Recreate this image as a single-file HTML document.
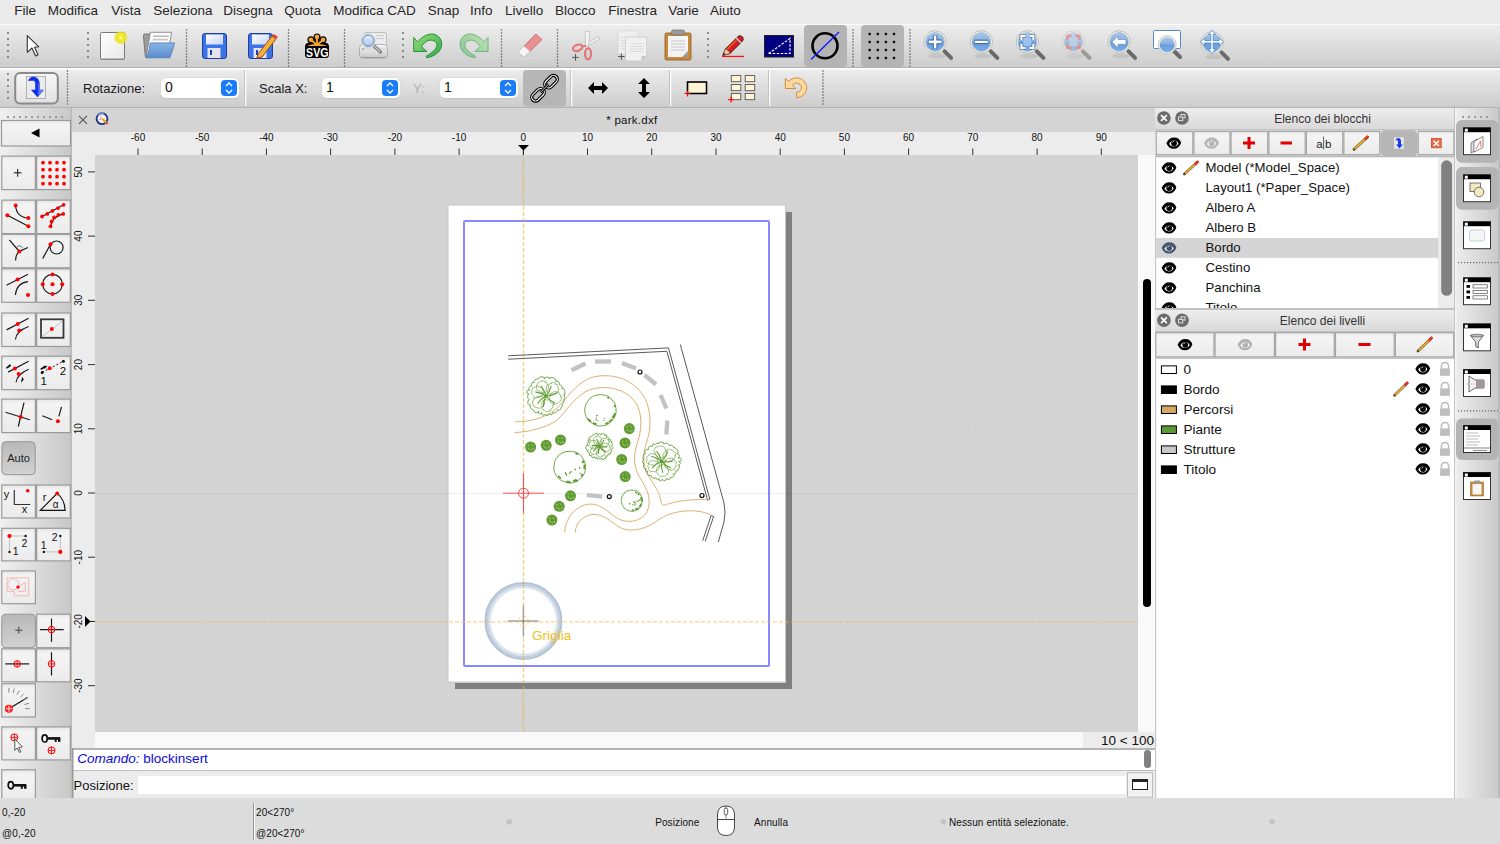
<!DOCTYPE html><html><head><meta charset="utf-8"><style>
*{margin:0;padding:0;box-sizing:border-box}
html,body{width:1500px;height:844px;overflow:hidden;background:#ececec;font-family:"Liberation Sans",sans-serif;color:#222}
.a{position:absolute}
.t{position:absolute;white-space:nowrap;line-height:1}
svg.ov{position:absolute;left:0;top:0;overflow:visible}
.spin{position:absolute;background:#fff;border-radius:5px;box-shadow:0 0 0 0.5px #d8d8d8, 0 0.5px 1px rgba(0,0,0,.15)}
.spinb{position:absolute;background:#1a7cf8;border-radius:4px}
</style></head><body><div class="a" style="left:0;top:0;width:1500px;height:24px;background:#ebebeb"></div>
<div class="t" style="left:14.3px;top:4px;font-size:13.5px;color:#262626">File</div>
<div class="t" style="left:47.7px;top:4px;font-size:13.5px;color:#262626">Modifica</div>
<div class="t" style="left:111.3px;top:4px;font-size:13.5px;color:#262626">Vista</div>
<div class="t" style="left:153.3px;top:4px;font-size:13.5px;color:#262626">Seleziona</div>
<div class="t" style="left:223.3px;top:4px;font-size:13.5px;color:#262626">Disegna</div>
<div class="t" style="left:284.3px;top:4px;font-size:13.5px;color:#262626">Quota</div>
<div class="t" style="left:333.3px;top:4px;font-size:13.5px;color:#262626">Modifica CAD</div>
<div class="t" style="left:427.7px;top:4px;font-size:13.5px;color:#262626">Snap</div>
<div class="t" style="left:470px;top:4px;font-size:13.5px;color:#262626">Info</div>
<div class="t" style="left:505px;top:4px;font-size:13.5px;color:#262626">Livello</div>
<div class="t" style="left:555px;top:4px;font-size:13.5px;color:#262626">Blocco</div>
<div class="t" style="left:608.3px;top:4px;font-size:13.5px;color:#262626">Finestra</div>
<div class="t" style="left:668.3px;top:4px;font-size:13.5px;color:#262626">Varie</div>
<div class="t" style="left:710px;top:4px;font-size:13.5px;color:#262626">Aiuto</div>
<div class="a" style="left:0;top:24px;width:1500px;height:44px;background:linear-gradient(#fbfbfb 0,#fbfbfb 1px,#ededed 1.5px,#cdcdcd 42.5px,#aeaeae 43px,#b4b4b4 44px)"></div>
<div class="a" style="left:0;top:68px;width:1500px;height:40px;background:linear-gradient(#fbfbfb 0,#fbfbfb 1.5px,#ececec 2px,#cdcdcd 38.5px,#aeaeae 39px,#b8b8b8 40px)"></div>
<div class="a" style="left:0;top:108px;width:72px;height:690px;background:linear-gradient(90deg,#f0f0f0 0,#dcdcdc 35px,#c8c8c8 70px,#b4b4b4 72px)"></div>
<div class="a" style="left:72px;top:108px;width:1083px;height:24px;background:#d4d4d4"></div>
<div class="a" style="left:72px;top:132px;width:1083px;height:23px;background:#ececec"></div>
<div class="a" style="left:72px;top:132px;width:23px;height:616px;background:#ececec"></div>
<div class="a" style="left:95px;top:155px;width:1043px;height:577px;background:#d3d3d3"></div>
<div class="a" style="left:1138px;top:155px;width:17px;height:593px;background:#f9f9f9"></div>
<div class="a" style="left:95px;top:732px;width:1060px;height:16px;background:#f9f9f9"></div>
<div class="a" style="left:1143px;top:279px;width:8px;height:328px;background:#000;border-radius:4px"></div>
<div class="a" style="left:72px;top:748px;width:1083px;height:50px;background:#ececec"></div>
<div class="a" style="left:72px;top:748px;width:1083px;height:2px;background:#b4b4b4"></div>
<div class="a" style="left:72px;top:750px;width:1083px;height:20px;background:#fff"></div>
<div class="a" style="left:72px;top:770px;width:1083px;height:1px;background:#c0c0c0"></div>
<div class="a" style="left:138px;top:776px;width:988px;height:18px;background:#fff"></div>
<div class="a" style="left:1155px;top:108px;width:299px;height:690px;background:#ececec"></div>
<div class="a" style="left:1155px;top:157px;width:283px;height:151px;background:#fff"></div>
<div class="a" style="left:1155px;top:358px;width:299px;height:440px;background:#fff"></div>
<div class="a" style="left:1454px;top:108px;width:46px;height:690px;background:linear-gradient(90deg,#c4c4c4 0,#c4c4c4 1px,#f6f6f6 1px,#ececec 3px,#cacaca 44px,#b8b8b8 45px,#b8b8b8 46px)"></div>
<svg class="ov" width="1500" height="844" viewBox="0 0 1500 844"><defs>
<linearGradient id="paper" x1="0" y1="0" x2="1" y2="1"><stop offset="0" stop-color="#fff"/><stop offset="1" stop-color="#e8e8e8"/></linearGradient>
<radialGradient id="glow"><stop offset="0" stop-color="#fffff0"/><stop offset="0.25" stop-color="#f4ec30"/><stop offset="0.7" stop-color="#eee020" stop-opacity="0.9"/><stop offset="1" stop-color="#eee020" stop-opacity="0"/></radialGradient>
<linearGradient id="folder" x1="0" y1="0" x2="0" y2="1"><stop offset="0" stop-color="#8ab4e4"/><stop offset="1" stop-color="#5a8ccc"/></linearGradient>
<linearGradient id="flop" x1="0" y1="0" x2="1" y2="1"><stop offset="0" stop-color="#ffffff"/><stop offset="1" stop-color="#c8d4f8"/></linearGradient>
<linearGradient id="printer" x1="0" y1="0" x2="0" y2="1"><stop offset="0" stop-color="#fafafa"/><stop offset="1" stop-color="#c8c8c8"/></linearGradient>
<linearGradient id="lens" x1="0" y1="0" x2="0" y2="1"><stop offset="0" stop-color="#a8c8ec"/><stop offset="0.45" stop-color="#8ab0e0"/><stop offset="0.5" stop-color="#6a9cdc"/><stop offset="1" stop-color="#78aee8"/></linearGradient>
<linearGradient id="lens2" x1="0" y1="0" x2="0" y2="1"><stop offset="0" stop-color="#e8f0fa"/><stop offset="1" stop-color="#a8c4e4"/></linearGradient>
<linearGradient id="btn" x1="0" y1="0" x2="0" y2="1"><stop offset="0" stop-color="#f6f6f6"/><stop offset="0.5" stop-color="#ededed"/><stop offset="1" stop-color="#e0e0e0"/></linearGradient>
<linearGradient id="lbtn" x1="0" y1="0" x2="0" y2="1"><stop offset="0" stop-color="#e6e6e6"/><stop offset="0.15" stop-color="#f4f4f4"/><stop offset="1" stop-color="#ebebeb"/></linearGradient>
<linearGradient id="hdr" x1="0" y1="0" x2="0" y2="1"><stop offset="0" stop-color="#ededed"/><stop offset="1" stop-color="#d9d9d9"/></linearGradient>
<radialGradient id="ringg" gradientUnits="userSpaceOnUse" cx="523.4" cy="621" r="39.5"><stop offset="0.78" stop-color="#ffffff" stop-opacity="0"/><stop offset="0.88" stop-color="#d8e2ec"/><stop offset="0.95" stop-color="#bccadb"/><stop offset="1" stop-color="#b4c4d6"/></radialGradient>
<linearGradient id="undog" x1="0" y1="0" x2="1" y2="1"><stop offset="0" stop-color="#98dc78"/><stop offset="1" stop-color="#2ea84a"/></linearGradient>
<linearGradient id="redog" x1="0" y1="0" x2="1" y2="1"><stop offset="0" stop-color="#c0e4b0"/><stop offset="1" stop-color="#80c490"/></linearGradient>
<linearGradient id="hlbtn" x1="0" y1="0" x2="0" y2="1"><stop offset="0" stop-color="#b8b8b8"/><stop offset="1" stop-color="#d2d2d2"/></linearGradient>
</defs><rect x="7.0" y="32.0" width="2" height="2" fill="#8a8a8a"/><rect x="7.0" y="38.0" width="2" height="2" fill="#8a8a8a"/><rect x="7.0" y="44.0" width="2" height="2" fill="#8a8a8a"/><rect x="7.0" y="50.0" width="2" height="2" fill="#8a8a8a"/><rect x="7.0" y="56.0" width="2" height="2" fill="#8a8a8a"/><rect x="87.0" y="32.0" width="2" height="2" fill="#8a8a8a"/><rect x="87.0" y="38.0" width="2" height="2" fill="#8a8a8a"/><rect x="87.0" y="44.0" width="2" height="2" fill="#8a8a8a"/><rect x="87.0" y="50.0" width="2" height="2" fill="#8a8a8a"/><rect x="87.0" y="56.0" width="2" height="2" fill="#8a8a8a"/><rect x="185.85" y="29.35" width="1.3" height="1.3" fill="#555"/><rect x="185.85" y="32.35" width="1.3" height="1.3" fill="#555"/><rect x="185.85" y="35.35" width="1.3" height="1.3" fill="#555"/><rect x="185.85" y="38.35" width="1.3" height="1.3" fill="#555"/><rect x="185.85" y="41.35" width="1.3" height="1.3" fill="#555"/><rect x="185.85" y="44.35" width="1.3" height="1.3" fill="#555"/><rect x="185.85" y="47.35" width="1.3" height="1.3" fill="#555"/><rect x="185.85" y="50.35" width="1.3" height="1.3" fill="#555"/><rect x="185.85" y="53.35" width="1.3" height="1.3" fill="#555"/><rect x="185.85" y="56.35" width="1.3" height="1.3" fill="#555"/><rect x="185.85" y="59.35" width="1.3" height="1.3" fill="#555"/><rect x="185.85" y="62.35" width="1.3" height="1.3" fill="#555"/><rect x="185.85" y="65.35" width="1.3" height="1.3" fill="#555"/><rect x="287.85" y="29.35" width="1.3" height="1.3" fill="#555"/><rect x="287.85" y="32.35" width="1.3" height="1.3" fill="#555"/><rect x="287.85" y="35.35" width="1.3" height="1.3" fill="#555"/><rect x="287.85" y="38.35" width="1.3" height="1.3" fill="#555"/><rect x="287.85" y="41.35" width="1.3" height="1.3" fill="#555"/><rect x="287.85" y="44.35" width="1.3" height="1.3" fill="#555"/><rect x="287.85" y="47.35" width="1.3" height="1.3" fill="#555"/><rect x="287.85" y="50.35" width="1.3" height="1.3" fill="#555"/><rect x="287.85" y="53.35" width="1.3" height="1.3" fill="#555"/><rect x="287.85" y="56.35" width="1.3" height="1.3" fill="#555"/><rect x="287.85" y="59.35" width="1.3" height="1.3" fill="#555"/><rect x="287.85" y="62.35" width="1.3" height="1.3" fill="#555"/><rect x="287.85" y="65.35" width="1.3" height="1.3" fill="#555"/><rect x="343.85" y="29.35" width="1.3" height="1.3" fill="#555"/><rect x="343.85" y="32.35" width="1.3" height="1.3" fill="#555"/><rect x="343.85" y="35.35" width="1.3" height="1.3" fill="#555"/><rect x="343.85" y="38.35" width="1.3" height="1.3" fill="#555"/><rect x="343.85" y="41.35" width="1.3" height="1.3" fill="#555"/><rect x="343.85" y="44.35" width="1.3" height="1.3" fill="#555"/><rect x="343.85" y="47.35" width="1.3" height="1.3" fill="#555"/><rect x="343.85" y="50.35" width="1.3" height="1.3" fill="#555"/><rect x="343.85" y="53.35" width="1.3" height="1.3" fill="#555"/><rect x="343.85" y="56.35" width="1.3" height="1.3" fill="#555"/><rect x="343.85" y="59.35" width="1.3" height="1.3" fill="#555"/><rect x="343.85" y="62.35" width="1.3" height="1.3" fill="#555"/><rect x="343.85" y="65.35" width="1.3" height="1.3" fill="#555"/><rect x="402.0" y="32.0" width="2" height="2" fill="#8a8a8a"/><rect x="402.0" y="38.0" width="2" height="2" fill="#8a8a8a"/><rect x="402.0" y="44.0" width="2" height="2" fill="#8a8a8a"/><rect x="402.0" y="50.0" width="2" height="2" fill="#8a8a8a"/><rect x="402.0" y="56.0" width="2" height="2" fill="#8a8a8a"/><rect x="500.85" y="29.35" width="1.3" height="1.3" fill="#555"/><rect x="500.85" y="32.35" width="1.3" height="1.3" fill="#555"/><rect x="500.85" y="35.35" width="1.3" height="1.3" fill="#555"/><rect x="500.85" y="38.35" width="1.3" height="1.3" fill="#555"/><rect x="500.85" y="41.35" width="1.3" height="1.3" fill="#555"/><rect x="500.85" y="44.35" width="1.3" height="1.3" fill="#555"/><rect x="500.85" y="47.35" width="1.3" height="1.3" fill="#555"/><rect x="500.85" y="50.35" width="1.3" height="1.3" fill="#555"/><rect x="500.85" y="53.35" width="1.3" height="1.3" fill="#555"/><rect x="500.85" y="56.35" width="1.3" height="1.3" fill="#555"/><rect x="500.85" y="59.35" width="1.3" height="1.3" fill="#555"/><rect x="500.85" y="62.35" width="1.3" height="1.3" fill="#555"/><rect x="500.85" y="65.35" width="1.3" height="1.3" fill="#555"/><rect x="556.85" y="29.35" width="1.3" height="1.3" fill="#555"/><rect x="556.85" y="32.35" width="1.3" height="1.3" fill="#555"/><rect x="556.85" y="35.35" width="1.3" height="1.3" fill="#555"/><rect x="556.85" y="38.35" width="1.3" height="1.3" fill="#555"/><rect x="556.85" y="41.35" width="1.3" height="1.3" fill="#555"/><rect x="556.85" y="44.35" width="1.3" height="1.3" fill="#555"/><rect x="556.85" y="47.35" width="1.3" height="1.3" fill="#555"/><rect x="556.85" y="50.35" width="1.3" height="1.3" fill="#555"/><rect x="556.85" y="53.35" width="1.3" height="1.3" fill="#555"/><rect x="556.85" y="56.35" width="1.3" height="1.3" fill="#555"/><rect x="556.85" y="59.35" width="1.3" height="1.3" fill="#555"/><rect x="556.85" y="62.35" width="1.3" height="1.3" fill="#555"/><rect x="556.85" y="65.35" width="1.3" height="1.3" fill="#555"/><rect x="707.0" y="32.0" width="2" height="2" fill="#8a8a8a"/><rect x="707.0" y="38.0" width="2" height="2" fill="#8a8a8a"/><rect x="707.0" y="44.0" width="2" height="2" fill="#8a8a8a"/><rect x="707.0" y="50.0" width="2" height="2" fill="#8a8a8a"/><rect x="707.0" y="56.0" width="2" height="2" fill="#8a8a8a"/><rect x="852.35" y="29.35" width="1.3" height="1.3" fill="#555"/><rect x="852.35" y="32.35" width="1.3" height="1.3" fill="#555"/><rect x="852.35" y="35.35" width="1.3" height="1.3" fill="#555"/><rect x="852.35" y="38.35" width="1.3" height="1.3" fill="#555"/><rect x="852.35" y="41.35" width="1.3" height="1.3" fill="#555"/><rect x="852.35" y="44.35" width="1.3" height="1.3" fill="#555"/><rect x="852.35" y="47.35" width="1.3" height="1.3" fill="#555"/><rect x="852.35" y="50.35" width="1.3" height="1.3" fill="#555"/><rect x="852.35" y="53.35" width="1.3" height="1.3" fill="#555"/><rect x="852.35" y="56.35" width="1.3" height="1.3" fill="#555"/><rect x="852.35" y="59.35" width="1.3" height="1.3" fill="#555"/><rect x="852.35" y="62.35" width="1.3" height="1.3" fill="#555"/><rect x="852.35" y="65.35" width="1.3" height="1.3" fill="#555"/><rect x="909.35" y="29.35" width="1.3" height="1.3" fill="#555"/><rect x="909.35" y="32.35" width="1.3" height="1.3" fill="#555"/><rect x="909.35" y="35.35" width="1.3" height="1.3" fill="#555"/><rect x="909.35" y="38.35" width="1.3" height="1.3" fill="#555"/><rect x="909.35" y="41.35" width="1.3" height="1.3" fill="#555"/><rect x="909.35" y="44.35" width="1.3" height="1.3" fill="#555"/><rect x="909.35" y="47.35" width="1.3" height="1.3" fill="#555"/><rect x="909.35" y="50.35" width="1.3" height="1.3" fill="#555"/><rect x="909.35" y="53.35" width="1.3" height="1.3" fill="#555"/><rect x="909.35" y="56.35" width="1.3" height="1.3" fill="#555"/><rect x="909.35" y="59.35" width="1.3" height="1.3" fill="#555"/><rect x="909.35" y="62.35" width="1.3" height="1.3" fill="#555"/><rect x="909.35" y="65.35" width="1.3" height="1.3" fill="#555"/><path d="M27.3 35.7 L27.3 52.3 L32 48 L35.6 56 L38 54.7 L34.6 47.3 L38.8 46.8 Z" fill="#fff" stroke="#333" stroke-width="1.1" stroke-linejoin="round"/><rect x="100.5" y="32.5" width="24" height="27" rx="1" fill="url(#paper)" stroke="#7a7a7a" stroke-width="1"/><rect x="101" y="58.5" width="23" height="1.5" fill="#8a8a8a"/><circle cx="120.8" cy="37.6" r="7.3" fill="url(#glow)"/><path d="M144.5 34 Q143.3 34 143.4 35.5 L145.3 56.8 L150 56.8 L150.5 34 Z" fill="#9c9c9c" stroke="#6a6a6a" stroke-width="0.8"/><path d="M150.3 32.3 L171.7 32.3 L169.5 44 L146.5 56 Z" fill="#fafafa" stroke="#7a7a7a" stroke-width="0.8"/><rect x="153.2" y="35.4" width="15.5" height="1.6" fill="#bdbdbd"/><rect x="152.8" y="38.8" width="15" height="1.6" fill="#c4c4c4"/><path d="M150.3 42.9 L174.6 42.9 Q173 50 169.8 57.8 L145.9 57.8 Q149 54 150.3 42.9 Z" fill="url(#folder)" stroke="#4a7cc0" stroke-width="0.8" stroke-linejoin="round"/><rect x="202.5" y="33.5" width="24" height="25" rx="2.5" fill="#3b73e8" stroke="#1f3fa0" stroke-width="1"/><rect x="206" y="34.5" width="17" height="10" fill="url(#flop)"/><rect x="207.5" y="48" width="13" height="10" fill="#e4e4ea"/><rect x="210" y="50" width="2" height="5" fill="#1840c0"/><rect x="248.5" y="33.5" width="24" height="25" rx="2.5" fill="#3b73e8" stroke="#1f3fa0" stroke-width="1"/><rect x="252" y="34.5" width="17" height="10" fill="url(#flop)"/><rect x="253.5" y="48" width="13" height="10" fill="#e4e4ea"/><rect x="256" y="50" width="2" height="5" fill="#1840c0"/><path d="M258 54 L272 36 L276 39 L262 57 L257 58 Z" fill="#f2b53a" stroke="#a0401a" stroke-width="1"/><path d="M272 36 L274 34 L278 37 L276 39 Z" fill="#e04030"/><path d="M305 47 Q305 42.8 309 42.8 L325 42.8 Q329 42.8 329 47 L329 54.5 Q329 58 325.5 58 L308.5 58 Q305 58 305 54.5 Z" fill="#000"/><line x1="317" y1="44.5" x2="310.9" y2="39.8" stroke="#000" stroke-width="3.6" stroke-linecap="round"/><circle cx="310.9" cy="39.8" r="3.5" fill="#000"/><line x1="317" y1="44.5" x2="317" y2="36.9" stroke="#000" stroke-width="3.6" stroke-linecap="round"/><circle cx="317" cy="36.9" r="3.5" fill="#000"/><line x1="317" y1="44.5" x2="323.1" y2="39.8" stroke="#000" stroke-width="3.6" stroke-linecap="round"/><circle cx="323.1" cy="39.8" r="3.5" fill="#000"/><line x1="317" y1="45" x2="310.9" y2="39.8" stroke="#f9a930" stroke-width="1.8"/><circle cx="310.9" cy="39.8" r="2.3" fill="#f9a930"/><line x1="317" y1="45" x2="317" y2="36.9" stroke="#f9a930" stroke-width="1.8"/><circle cx="317" cy="36.9" r="2.3" fill="#f9a930"/><line x1="317" y1="45" x2="323.1" y2="39.8" stroke="#f9a930" stroke-width="1.8"/><circle cx="323.1" cy="39.8" r="2.3" fill="#f9a930"/><path d="M307 45.9 Q312 43.8 317 44 Q322 43.8 327.5 45.9 Z" fill="#f9a930"/><g transform="translate(317.3 57) scale(0.78 1)"><text x="0" y="0" font-family="Liberation Sans" font-weight="bold" font-size="13.6" fill="#fff" text-anchor="middle">SVG</text></g><rect x="364.5" y="32.5" width="22" height="16" rx="1" fill="#ececec" stroke="#b4b4b4" stroke-width="0.8"/><rect x="376" y="35" width="8" height="1" fill="#ccc"/><rect x="376" y="38" width="8" height="1" fill="#ccc"/><path d="M359.5 48 Q359.5 44.5 363 44.5 L384 44.5 Q387.5 44.5 387.5 48 L387.5 55.5 Q387.5 57.5 385 57.5 L362 57.5 Q359.5 57.5 359.5 55.5 Z" fill="url(#printer)" stroke="#a4a4a4" stroke-width="0.8"/><rect x="361" y="47.5" width="25" height="2.5" fill="#dcdcdc"/><circle cx="363" cy="49" r="0.8" fill="#777"/><ellipse cx="373.5" cy="58" rx="13" ry="1" fill="#000" opacity="0.12"/><line x1="373" y1="45" x2="380.5" y2="52" stroke="#7a7a7a" stroke-width="3.2" stroke-linecap="round"/><line x1="373.5" y1="45.5" x2="380" y2="51.5" stroke="#c8c8c8" stroke-width="1.2" stroke-linecap="round"/><circle cx="368.3" cy="40.7" r="7" fill="#f4f4f4" stroke="#c4c4c4" stroke-width="0.8"/><circle cx="368.3" cy="40.7" r="5.6" fill="url(#lens2)" stroke="#4f82c8" stroke-width="1"/><path d="M413.7 37.4 L417.6 41.9 C421 38 426 34 431.8 34 C437.5 34 441.7 38.5 441.7 44.2 C441.7 51 435 56.5 426.7 57.8 L426.1 56.3 C432 53 436.9 49 436.9 44.7 C436.9 42 434 40.2 430.1 40.2 C427 40.2 424 43 421.6 46.4 L426.7 51.5 L413.7 51.5 Z" fill="url(#undog)" stroke="#1a8a30" stroke-width="0.9" stroke-linejoin="round"/><path d="M413.7 37.4 L417.6 41.9 C421 38 426 34 431.8 34 C437.5 34 441.7 38.5 441.7 44.2 C441.7 51 435 56.5 426.7 57.8 L426.1 56.3 C432 53 436.9 49 436.9 44.7 C436.9 42 434 40.2 430.1 40.2 C427 40.2 424 43 421.6 46.4 L426.7 51.5 L413.7 51.5 Z" transform="translate(901.7 0) scale(-1 1)" fill="url(#redog)" stroke="#6aae80" stroke-width="0.9" stroke-linejoin="round"/><path d="M518 52 L536 34 L542 39.5 L524 57.5 Z" fill="#e89090" stroke="#c46a6a" stroke-width="0.8"/><path d="M518 52 L524 46 L530 51.5 L524 57.5 Z" fill="#f4f4f4" stroke="#c8c8c8" stroke-width="0.8"/><line x1="522" y1="58.5" x2="541" y2="57" stroke="#ddd" stroke-width="1.2"/><path d="M585.2 31.5 L589.5 31 L589 46.5 L585.5 46 Z" fill="#f4f4f4" stroke="#b8b8b8" stroke-width="0.7"/><path d="M588.5 42.5 L598.8 36.5 L599.8 39 L589 45 Z" fill="#f4f4f4" stroke="#b8b8b8" stroke-width="0.7"/><ellipse cx="577.6" cy="47.8" rx="4.8" ry="3" transform="rotate(-20 577.6 47.8)" fill="none" stroke="#e47878" stroke-width="2.3"/><ellipse cx="588.1" cy="53.8" rx="3" ry="5.5" fill="none" stroke="#e47878" stroke-width="2.3"/><path d="M581.5 46.5 L586 46" stroke="#e47878" stroke-width="2"/><rect x="572.2" y="56.9" width="6.6" height="1" fill="#555"/><rect x="575" y="54.1" width="1" height="6.6" fill="#555"/><rect x="618" y="30.7" width="20.2" height="23.7" rx="1.2" fill="#efefef" stroke="#d4d4d4" stroke-width="0.8"/><rect x="621" y="37" width="5" height="0.8" fill="#d8d8d8"/><rect x="621" y="40" width="5" height="0.8" fill="#d8d8d8"/><rect x="621" y="42.8" width="5" height="0.8" fill="#d8d8d8"/><rect x="621" y="45.6" width="5" height="0.8" fill="#d8d8d8"/><rect x="621" y="48.4" width="5" height="0.8" fill="#d8d8d8"/><path d="M626.5 37 Q625.6 37 625.6 38 L625.6 60 Q625.6 61 626.5 61 L641.5 61 L646.6 56 L646.6 38 Q646.6 37 645.6 37 Z" fill="#f1f1f1" stroke="#c8c8c8" stroke-width="0.8"/><path d="M641.5 61 L641.5 56 L646.6 56 Z" fill="#c4c4c4"/><rect x="630" y="43.3" width="13.5" height="0.8" fill="#d4d4d4"/><rect x="630" y="46" width="13.5" height="0.8" fill="#d4d4d4"/><rect x="630" y="48.6" width="13.5" height="0.8" fill="#d4d4d4"/><rect x="630" y="51.2" width="13.5" height="0.8" fill="#d4d4d4"/><rect x="618.1" y="56" width="6.6" height="1" fill="#555"/><rect x="620.9" y="53.2" width="1" height="6.6" fill="#555"/><rect x="665" y="33" width="26" height="27" rx="1.5" fill="#c8893a" stroke="#8a5a20" stroke-width="0.8"/><rect x="668" y="36" width="20" height="21" fill="#f4f4f4"/><rect x="671.5" y="30" width="13" height="5" rx="1.5" fill="#9a9a9a" stroke="#666" stroke-width="0.6"/><line x1="671" y1="41" x2="685" y2="41" stroke="#c0c0c0" stroke-width="0.9"/><line x1="671" y1="44" x2="685" y2="44" stroke="#c0c0c0" stroke-width="0.9"/><line x1="671" y1="47" x2="685" y2="47" stroke="#c0c0c0" stroke-width="0.9"/><line x1="671" y1="50" x2="685" y2="50" stroke="#c0c0c0" stroke-width="0.9"/><path d="M682 57 L688 51 L688 57 Z" fill="#9a9a9a"/><line x1="728.5" y1="50.5" x2="740" y2="39" stroke="#5a2a10" stroke-width="7.2" stroke-linecap="round"/><line x1="728.5" y1="50.5" x2="740" y2="39" stroke="#d8182a" stroke-width="5.4" stroke-linecap="round"/><line x1="727.3" y1="49.3" x2="736.5" y2="40" stroke="#f05a20" stroke-width="1.6"/><path d="M735.6 37.4 L741.2 43" stroke="#c8c8c8" stroke-width="1.5"/><path d="M725.8 48.2 L730.8 53.2 L722.6 55.6 Z" fill="#f2c8a0" stroke="#5a2a10" stroke-width="0.8" stroke-linejoin="round"/><path d="M722.6 55.6 L723.6 52.6 L725.6 54.6 Z" fill="#222"/><rect x="722" y="55.8" width="22" height="1.3" fill="#ff1010"/><rect x="764.5" y="35.5" width="29" height="21.5" fill="#000080" stroke="#222" stroke-width="1"/><path d="M768.5 53.5 L790 38.5 L790 53.5 Z" fill="none" stroke="#fff" stroke-width="1.2" stroke-dasharray="2.5,1.5"/><rect x="804" y="25" width="43" height="42" rx="4" fill="#b4b4b4"/><rect x="861" y="25" width="43" height="42" rx="4" fill="#b4b4b4"/><circle cx="825" cy="45.8" r="12.5" fill="none" stroke="#000" stroke-width="2.6"/><line x1="811" y1="59.5" x2="839" y2="32" stroke="#0a1aff" stroke-width="1.3"/><rect x="868.5" y="32.8" width="2.4" height="2.4" fill="#111"/><rect x="876.5999999999999" y="32.8" width="2.4" height="2.4" fill="#111"/><rect x="884.6999999999999" y="32.8" width="2.4" height="2.4" fill="#111"/><rect x="892.8" y="32.8" width="2.4" height="2.4" fill="#111"/><rect x="868.5" y="40.8" width="2.4" height="2.4" fill="#111"/><rect x="876.5999999999999" y="40.8" width="2.4" height="2.4" fill="#111"/><rect x="884.6999999999999" y="40.8" width="2.4" height="2.4" fill="#111"/><rect x="892.8" y="40.8" width="2.4" height="2.4" fill="#111"/><rect x="868.5" y="48.8" width="2.4" height="2.4" fill="#111"/><rect x="876.5999999999999" y="48.8" width="2.4" height="2.4" fill="#111"/><rect x="884.6999999999999" y="48.8" width="2.4" height="2.4" fill="#111"/><rect x="892.8" y="48.8" width="2.4" height="2.4" fill="#111"/><rect x="868.5" y="56.8" width="2.4" height="2.4" fill="#111"/><rect x="876.5999999999999" y="56.8" width="2.4" height="2.4" fill="#111"/><rect x="884.6999999999999" y="56.8" width="2.4" height="2.4" fill="#111"/><rect x="892.8" y="56.8" width="2.4" height="2.4" fill="#111"/><g><ellipse cx="937.1" cy="55.9" rx="9" ry="2.5" fill="#000" opacity="0.08"/><line x1="944.6" y1="51.4" x2="951.1" y2="57.9" stroke="#6a6a6a" stroke-width="4" stroke-linecap="round"/><circle cx="935.1" cy="41.9" r="11.2" fill="#f2f2ec" stroke="#bdbdb4" stroke-width="1"/><circle cx="935.1" cy="41.9" r="9.3" fill="url(#lens)" stroke="#9ab0c8" stroke-width="0.7"/><path d="M928.5 41.9 h13 M935.1 35.5 v13" stroke="#2a5a9a" stroke-width="4.6"/><path d="M928.8 41.9 h12.6 M935.1 35.8 v12.4" stroke="#fff" stroke-width="2.6"/></g><g><ellipse cx="983.3" cy="55.9" rx="9" ry="2.5" fill="#000" opacity="0.08"/><line x1="990.8" y1="51.4" x2="997.3" y2="57.9" stroke="#6a6a6a" stroke-width="4" stroke-linecap="round"/><circle cx="981.3" cy="41.9" r="11.2" fill="#f2f2ec" stroke="#bdbdb4" stroke-width="1"/><circle cx="981.3" cy="41.9" r="9.3" fill="url(#lens)" stroke="#9ab0c8" stroke-width="0.7"/><path d="M974.5 41.9 h13.6" stroke="#2a5a9a" stroke-width="4.4"/><path d="M974.8 41.9 h13" stroke="#fff" stroke-width="2.4"/></g><g><ellipse cx="1029.4" cy="55.9" rx="9" ry="2.5" fill="#000" opacity="0.08"/><line x1="1036.9" y1="51.4" x2="1043.4" y2="57.9" stroke="#6a6a6a" stroke-width="4" stroke-linecap="round"/><circle cx="1027.4" cy="41.9" r="11.2" fill="#f2f2ec" stroke="#bdbdb4" stroke-width="1"/><circle cx="1027.4" cy="41.9" r="9.3" fill="url(#lens)" stroke="#9ab0c8" stroke-width="0.7"/><rect x="1023.4000000000001" y="37.9" width="8" height="8" fill="#a8c8ec" opacity="0.8"/><path d="M1021.4000000000001 39.9 V35.9 H1025.4 M1029.4 35.9 H1033.4 V39.9 M1033.4 43.9 V47.9 H1029.4 M1025.4 47.9 H1021.4000000000001 V43.9" fill="none" stroke="#2a5aa0" stroke-width="3.4"/><path d="M1021.4000000000001 39.9 V35.9 H1025.4 M1029.4 35.9 H1033.4 V39.9 M1033.4 43.9 V47.9 H1029.4 M1025.4 47.9 H1021.4000000000001 V43.9" fill="none" stroke="#fff" stroke-width="2.2"/></g><g opacity="0.55"><ellipse cx="1075.5" cy="55.9" rx="9" ry="2.5" fill="#000" opacity="0.08"/><line x1="1083.0" y1="51.4" x2="1089.5" y2="57.9" stroke="#6a6a6a" stroke-width="4" stroke-linecap="round"/><circle cx="1073.5" cy="41.9" r="11.2" fill="#f2f2ec" stroke="#bdbdb4" stroke-width="1"/><circle cx="1073.5" cy="41.9" r="9.3" fill="url(#lens)" stroke="#9ab0c8" stroke-width="0.7"/><rect x="1069.5" y="37.9" width="8" height="8" fill="#a8c8ec" opacity="0.8"/><path d="M1067.5 39.9 V35.9 H1071.5 M1075.5 35.9 H1079.5 V39.9 M1079.5 43.9 V47.9 H1075.5 M1071.5 47.9 H1067.5 V43.9" fill="none" stroke="#f05050" stroke-width="2.2"/></g><g><ellipse cx="1121.1" cy="55.9" rx="9" ry="2.5" fill="#000" opacity="0.08"/><line x1="1128.6" y1="51.4" x2="1135.1" y2="57.9" stroke="#6a6a6a" stroke-width="4" stroke-linecap="round"/><circle cx="1119.1" cy="41.9" r="11.2" fill="#f2f2ec" stroke="#bdbdb4" stroke-width="1"/><circle cx="1119.1" cy="41.9" r="9.3" fill="url(#lens)" stroke="#9ab0c8" stroke-width="0.7"/><path d="M1112 41.9 L1118 36 L1118 39.5 L1126 39.5 L1126 44.3 L1118 44.3 L1118 48 Z" fill="#fff" stroke="#5a88c0" stroke-width="0.6"/></g><rect x="1153.5" y="30.5" width="27" height="18" rx="1" fill="#fff" stroke="#5a88c8" stroke-width="1"/><line x1="1174" y1="51" x2="1180" y2="57" stroke="#6a6a6a" stroke-width="4" stroke-linecap="round"/><circle cx="1167.2" cy="44.7" r="9" fill="#f0f0ea" stroke="#c4c4bc" stroke-width="0.9"/><circle cx="1167.2" cy="44.7" r="7.5" fill="url(#lens)"/><g><ellipse cx="1214" cy="56.8" rx="9" ry="2.5" fill="#000" opacity="0.08"/><line x1="1221.5" y1="52.3" x2="1228" y2="58.8" stroke="#6a6a6a" stroke-width="4" stroke-linecap="round"/><circle cx="1212" cy="42.8" r="11.2" fill="#f2f2ec" stroke="#bdbdb4" stroke-width="1"/><circle cx="1212" cy="42.8" r="9.3" fill="url(#lens)" stroke="#9ab0c8" stroke-width="0.7"/><path d="M1212 30 l-3.5 4.5 h2.3 v6 h-6 v-2.3 l-4.5 3.5 l4.5 3.5 v-2.3 h6 v6 h-2.3 l3.5 4.5 l3.5 -4.5 h-2.3 v-6 h6 v2.3 l4.5 -3.5 l-4.5 -3.5 v2.3 h-6 v-6 h2.3 Z" fill="#fff" stroke="#3a78d0" stroke-width="0.7"/></g><rect x="7.0" y="73.0" width="2" height="2" fill="#8a8a8a"/><rect x="7.0" y="79.0" width="2" height="2" fill="#8a8a8a"/><rect x="7.0" y="85.0" width="2" height="2" fill="#8a8a8a"/><rect x="7.0" y="91.0" width="2" height="2" fill="#8a8a8a"/><rect x="7.0" y="97.0" width="2" height="2" fill="#8a8a8a"/><rect x="66.85" y="70.35" width="1.3" height="1.3" fill="#555"/><rect x="66.85" y="73.35" width="1.3" height="1.3" fill="#555"/><rect x="66.85" y="76.35" width="1.3" height="1.3" fill="#555"/><rect x="66.85" y="79.35" width="1.3" height="1.3" fill="#555"/><rect x="66.85" y="82.35" width="1.3" height="1.3" fill="#555"/><rect x="66.85" y="85.35" width="1.3" height="1.3" fill="#555"/><rect x="66.85" y="88.35" width="1.3" height="1.3" fill="#555"/><rect x="66.85" y="91.35" width="1.3" height="1.3" fill="#555"/><rect x="66.85" y="94.35" width="1.3" height="1.3" fill="#555"/><rect x="66.85" y="97.35" width="1.3" height="1.3" fill="#555"/><rect x="66.85" y="100.35" width="1.3" height="1.3" fill="#555"/><rect x="66.85" y="103.35" width="1.3" height="1.3" fill="#555"/><rect x="15.2" y="73" width="42.6" height="30.6" rx="5" fill="url(#btn)" stroke="#8a8a8a" stroke-width="2"/><rect x="26.5" y="76.5" width="19" height="22" fill="#ececec" stroke="#9a9a9a" stroke-width="0.7"/><path d="M28.5 80.5 Q30 76.5 34 77 Q39 77.5 39.5 84 L39.5 90 L43.5 90 L37.5 97 L31.5 90 L35.5 90 L35.5 84 Q35.5 80.5 33.5 80.5 Z" fill="#1030f0" stroke="#0a22c8" stroke-width="0.5"/><path d="M38 82 Q39.5 84 39.5 86 L39.5 90 L43.5 90 L38.5 96 Z" fill="#8898f8" opacity="0.7"/><rect x="244" y="70" width="1" height="36" fill="#c4c4c4"/><rect x="245" y="70" width="1.3" height="36" fill="#fdfdfd"/><rect x="570" y="70" width="1" height="36" fill="#c4c4c4"/><rect x="571" y="70" width="1.3" height="36" fill="#fdfdfd"/><rect x="669" y="70" width="1" height="36" fill="#c4c4c4"/><rect x="670" y="70" width="1.3" height="36" fill="#fdfdfd"/><rect x="768" y="70" width="1" height="36" fill="#c4c4c4"/><rect x="769" y="70" width="1.3" height="36" fill="#fdfdfd"/><rect x="822.35" y="70.35" width="1.3" height="1.3" fill="#555"/><rect x="822.35" y="73.35" width="1.3" height="1.3" fill="#555"/><rect x="822.35" y="76.35" width="1.3" height="1.3" fill="#555"/><rect x="822.35" y="79.35" width="1.3" height="1.3" fill="#555"/><rect x="822.35" y="82.35" width="1.3" height="1.3" fill="#555"/><rect x="822.35" y="85.35" width="1.3" height="1.3" fill="#555"/><rect x="822.35" y="88.35" width="1.3" height="1.3" fill="#555"/><rect x="822.35" y="91.35" width="1.3" height="1.3" fill="#555"/><rect x="822.35" y="94.35" width="1.3" height="1.3" fill="#555"/><rect x="822.35" y="97.35" width="1.3" height="1.3" fill="#555"/><rect x="822.35" y="100.35" width="1.3" height="1.3" fill="#555"/><rect x="822.35" y="103.35" width="1.3" height="1.3" fill="#555"/><rect x="523" y="70" width="43" height="36.4" rx="4" fill="#b6b6b6"/><g transform="rotate(-45 551 81.7)"><rect x="543.7" y="77.9" width="14.6" height="7.6" rx="3.8" fill="none" stroke="#000" stroke-width="3.3"/><rect x="543.7" y="77.9" width="14.6" height="7.6" rx="3.8" fill="none" stroke="#fff" stroke-width="1.1"/></g><g transform="rotate(-45 538 94.8)"><rect x="530.7" y="91.0" width="14.6" height="7.6" rx="3.8" fill="none" stroke="#000" stroke-width="3.3"/><rect x="530.7" y="91.0" width="14.6" height="7.6" rx="3.8" fill="none" stroke="#fff" stroke-width="1.1"/></g><line x1="540.5" y1="92.3" x2="548.5" y2="84.2" stroke="#000" stroke-width="2.4"/><line x1="540.5" y1="92.3" x2="548.5" y2="84.2" stroke="#fff" stroke-width="0.8"/><path d="M588 88 L594 82 L594 86 L602 86 L602 82 L608 88 L602 94 L602 90 L594 90 L594 94 Z" fill="#000"/><path d="M644 78 L650 84 L646 84 L646 92 L650 92 L644 98 L638 92 L642 92 L642 84 L638 84 Z" fill="#000"/><rect x="687.5" y="82" width="19" height="11.5" fill="#fff5d6" stroke="#000" stroke-width="1.6"/><path d="M684.5 93.5 h6 M687.5 90.5 v6" stroke="#ff0000" stroke-width="1.1"/><rect x="731.3" y="75.5" width="9.5" height="6.2" fill="#fff5d6" stroke="#555" stroke-width="0.9"/><rect x="745.2" y="75.5" width="9.5" height="6.2" fill="#fff5d6" stroke="#555" stroke-width="0.9"/><rect x="731.3" y="84.5" width="9.5" height="6.2" fill="#fff5d6" stroke="#555" stroke-width="0.9"/><rect x="745.2" y="84.5" width="9.5" height="6.2" fill="#fff5d6" stroke="#555" stroke-width="0.9"/><rect x="731.3" y="93.5" width="9.5" height="6.2" fill="#fff5d6" stroke="#555" stroke-width="0.9"/><rect x="745.2" y="93.5" width="9.5" height="6.2" fill="#fff5d6" stroke="#555" stroke-width="0.9"/><path d="M728 99.7 h6 M731 96.7 v6" stroke="#ff0000" stroke-width="1.1"/><path d="M785.3 78 L788.5 81.4 C790.5 79.3 793.5 77.9 796.7 77.9 C802.2 77.9 806.7 82.2 806.7 87.6 C806.7 93.1 802.2 97.6 796.7 97.6 L796.7 92.4 C799.2 92.4 801.4 90.2 801.4 87.6 C801.4 85.1 799.2 83.2 796.7 83.2 C795 83.2 793.5 84 792.4 85.1 L795.6 88.5 L785.3 88.5 Z" fill="#fdd8a0" stroke="#c8862a" stroke-width="0.9" stroke-linejoin="round"/><rect x="7" y="116" width="2" height="2" fill="#9a9a9a"/><rect x="13" y="116" width="2" height="2" fill="#9a9a9a"/><rect x="19" y="116" width="2" height="2" fill="#9a9a9a"/><rect x="25" y="116" width="2" height="2" fill="#9a9a9a"/><rect x="31" y="116" width="2" height="2" fill="#9a9a9a"/><rect x="37" y="116" width="2" height="2" fill="#9a9a9a"/><rect x="43" y="116" width="2" height="2" fill="#9a9a9a"/><rect x="49" y="116" width="2" height="2" fill="#9a9a9a"/><rect x="55" y="116" width="2" height="2" fill="#9a9a9a"/><rect x="61" y="116" width="2" height="2" fill="#9a9a9a"/><g transform="translate(1 120)"><rect x="0.5" y="0.5" width="69" height="25.5" fill="url(#lbtn)" stroke="#9a9a9a" stroke-width="1.2"/><path d="M30 13 L38.5 8.5 L38.5 17.5 Z" fill="#000"/></g><g transform="translate(1.3 155.6)"><rect x="0.5" y="0.5" width="33.6" height="33.5" fill="url(#lbtn)" stroke="#9a9a9a" stroke-width="1.2"/><path d="M12.5 17.2 h7.8 M16.4 13.3 v7.8" stroke="#111" stroke-width="1"/></g><g transform="translate(36.2 155.6)"><rect x="0.5" y="0.5" width="33.6" height="33.5" fill="url(#lbtn)" stroke="#9a9a9a" stroke-width="1.2"/><g transform="translate(1.5 0.8)"><circle cx="5.3" cy="6.3" r="1.85" fill="#ff0000"/><circle cx="5.3" cy="13.3" r="1.85" fill="#ff0000"/><circle cx="5.3" cy="20.3" r="1.85" fill="#ff0000"/><circle cx="5.3" cy="27.3" r="1.85" fill="#ff0000"/><circle cx="12.3" cy="6.3" r="1.85" fill="#ff0000"/><circle cx="12.3" cy="13.3" r="1.85" fill="#ff0000"/><circle cx="12.3" cy="20.3" r="1.85" fill="#ff0000"/><circle cx="12.3" cy="27.3" r="1.85" fill="#ff0000"/><circle cx="19.3" cy="6.3" r="1.85" fill="#ff0000"/><circle cx="19.3" cy="13.3" r="1.85" fill="#ff0000"/><circle cx="19.3" cy="20.3" r="1.85" fill="#ff0000"/><circle cx="19.3" cy="27.3" r="1.85" fill="#ff0000"/><circle cx="26.3" cy="6.3" r="1.85" fill="#ff0000"/><circle cx="26.3" cy="13.3" r="1.85" fill="#ff0000"/><circle cx="26.3" cy="20.3" r="1.85" fill="#ff0000"/><circle cx="26.3" cy="27.3" r="1.85" fill="#ff0000"/></g></g><g transform="translate(1.3 199.6)"><rect x="0.5" y="0.5" width="33.6" height="33.5" fill="url(#lbtn)" stroke="#9a9a9a" stroke-width="1.2"/><path d="M6.1 15.6 L27.1 26.7" stroke="#1a1a1a" stroke-width="1.2" fill="none"/><path d="M14.3 5.9 Q15 17.5 27.1 18.5" stroke="#1a1a1a" stroke-width="1.2" fill="none"/><circle cx="6.1" cy="15.6" r="2" fill="#ff0000"/><circle cx="27.1" cy="26.7" r="2" fill="#ff0000"/><circle cx="14.3" cy="5.9" r="2" fill="#ff0000"/><circle cx="27.1" cy="18.5" r="2" fill="#ff0000"/></g><g transform="translate(36.2 199.6)"><rect x="0.5" y="0.5" width="33.6" height="33.5" fill="url(#lbtn)" stroke="#9a9a9a" stroke-width="1.2"/><path d="M5.9 16.9 L27.4 5.2" stroke="#1a1a1a" stroke-width="1.2" fill="none"/><path d="M14.3 26.7 Q16 17 27 14.3" stroke="#1a1a1a" stroke-width="1.2" fill="none"/><circle cx="5.9" cy="16.9" r="1.9" fill="#ff0000"/><circle cx="11.1" cy="14.3" r="1.9" fill="#ff0000"/><circle cx="16.3" cy="11.3" r="1.9" fill="#ff0000"/><circle cx="21.8" cy="8.5" r="1.9" fill="#ff0000"/><circle cx="27.4" cy="5.2" r="1.9" fill="#ff0000"/><circle cx="14.3" cy="26.7" r="1.9" fill="#ff0000"/><circle cx="15.4" cy="21.9" r="1.9" fill="#ff0000"/><circle cx="17.9" cy="17.9" r="1.9" fill="#ff0000"/><circle cx="22.1" cy="15.3" r="1.9" fill="#ff0000"/><circle cx="27" cy="14.3" r="1.9" fill="#ff0000"/></g><g transform="translate(1.3 233.8)"><rect x="0.5" y="0.5" width="33.6" height="33.5" fill="url(#lbtn)" stroke="#9a9a9a" stroke-width="1.2"/><path d="M8.1 6.1 L18 17.6 L26.7 13.7" stroke="#1a1a1a" stroke-width="1.2" fill="none"/><path d="M14.3 26.7 Q14.5 20 18 17.6" stroke="#1a1a1a" stroke-width="1.2" fill="none"/><path d="M15.5 13.2 Q18.5 10.5 21.5 14" stroke="#333" stroke-width="0.7" fill="none"/><circle cx="18" cy="17.6" r="2" fill="#ff0000"/></g><g transform="translate(36.2 233.8)"><rect x="0.5" y="0.5" width="33.6" height="33.5" fill="url(#lbtn)" stroke="#9a9a9a" stroke-width="1.2"/><circle cx="20.4" cy="13.7" r="6.5" stroke="#1a1a1a" stroke-width="1.2" fill="none"/><path d="M6.5 24.8 L14.3 10.4" stroke="#1a1a1a" stroke-width="1.2" fill="none"/><circle cx="14.3" cy="10.4" r="2" fill="#ff0000"/></g><g transform="translate(1.3 268.3)"><rect x="0.5" y="0.5" width="33.6" height="33.5" fill="url(#lbtn)" stroke="#9a9a9a" stroke-width="1.2"/><path d="M5.2 16.9 L26.7 5.9" stroke="#1a1a1a" stroke-width="1.2" fill="none"/><path d="M14.1 26.7 Q15.5 14.5 26.7 13.4" stroke="#1a1a1a" stroke-width="1.2" fill="none"/><circle cx="16.3" cy="11.1" r="2" fill="#ff0000"/><circle cx="26.7" cy="26.7" r="2" fill="#ff0000"/></g><g transform="translate(36.2 268.3)"><rect x="0.5" y="0.5" width="33.6" height="33.5" fill="url(#lbtn)" stroke="#9a9a9a" stroke-width="1.2"/><circle cx="16.3" cy="15.9" r="9.8" stroke="#1a1a1a" stroke-width="1.2" fill="none"/><circle cx="16.3" cy="15.9" r="2" fill="#ff0000"/><circle cx="16.3" cy="6.1" r="2" fill="#ff0000"/><circle cx="16.3" cy="25.7" r="2" fill="#ff0000"/><circle cx="6.5" cy="15.9" r="2" fill="#ff0000"/><circle cx="26.1" cy="15.9" r="2" fill="#ff0000"/></g><g transform="translate(1.3 312.5)"><rect x="0.5" y="0.5" width="33.6" height="33.5" fill="url(#lbtn)" stroke="#9a9a9a" stroke-width="1.2"/><path d="M5.3 17.4 L27.3 5.7" stroke="#1a1a1a" stroke-width="1.2" fill="none"/><path d="M14.1 27 Q15 18.5 27.3 14" stroke="#1a1a1a" stroke-width="1.2" fill="none"/><circle cx="16.4" cy="11.4" r="2" fill="#ff0000"/><circle cx="17.9" cy="17.9" r="2" fill="#ff0000"/></g><g transform="translate(36.2 312.5)"><rect x="0.5" y="0.5" width="33.6" height="33.5" fill="url(#lbtn)" stroke="#9a9a9a" stroke-width="1.2"/><rect x="4.8" y="6.8" width="22.5" height="18.5" fill="none" stroke="#3a3a3a" stroke-width="1.8"/><path d="M6.8 23.6 L26.5 8.3" stroke="#888" stroke-width="0.8" stroke-dasharray="1.6,1.2"/><circle cx="15.6" cy="16.4" r="2" fill="#ff0000"/></g><g transform="translate(1.3 355.7)"><rect x="0.5" y="0.5" width="33.6" height="33.5" fill="url(#lbtn)" stroke="#9a9a9a" stroke-width="1.2"/><path d="M6.8 16.4 L27.3 5.6" stroke="#1a1a1a" stroke-width="1.2" fill="none"/><path d="M14.8 26.5 Q15.5 19 27.3 13.6" stroke="#1a1a1a" stroke-width="1.2" fill="none"/><circle cx="13.6" cy="12.9" r="2" fill="#ff0000"/><circle cx="17.4" cy="18.2" r="2" fill="#ff0000"/><path d="M4.5 12.7 L10 10 L8.5 8.2 Z" fill="#111"/><path d="M5 12.5 L8.5 10.5" stroke="#111" stroke-width="1.4"/><path d="M19.5 27 L21 21 L22.5 24 Z" fill="#111"/></g><g transform="translate(36.2 355.7)"><rect x="0.5" y="0.5" width="33.6" height="33.5" fill="url(#lbtn)" stroke="#9a9a9a" stroke-width="1.2"/><path d="M6 16.7 L27.2 5.5" stroke="#111" stroke-width="1" stroke-dasharray="2,2"/><circle cx="13.5" cy="12.6" r="2" fill="#ff0000"/><circle cx="6" cy="16.7" r="1.5" fill="#111"/><circle cx="27.2" cy="5.5" r="1.5" fill="#111"/><path d="M4.5 13.6 L8 11.6" stroke="#111" stroke-width="1.6"/><path d="M6.8 10.2 L11.3 10 L8.6 13.4 Z" fill="#111"/><text x="4.2" y="29" font-family="Liberation Sans" font-size="11.5" fill="#111">1</text><text x="23.6" y="19.2" font-family="Liberation Sans" font-size="11.5" fill="#111">2</text></g><g transform="translate(1.3 398.6)"><rect x="0.5" y="0.5" width="33.6" height="33.5" fill="url(#lbtn)" stroke="#9a9a9a" stroke-width="1.2"/><path d="M4.2 13.6 L28.5 21.2 M22.7 4.1 L17 27.9" stroke="#1a1a1a" stroke-width="1.2" fill="none"/><circle cx="19.4" cy="18.5" r="2" fill="#ff0000"/></g><g transform="translate(36.2 398.6)"><rect x="0.5" y="0.5" width="33.6" height="33.5" fill="url(#lbtn)" stroke="#9a9a9a" stroke-width="1.2"/><path d="M6.1 17.1 L16 21.2 M25.3 8.2 L22.7 17.7" stroke="#1a1a1a" stroke-width="1.2" fill="none"/><circle cx="21.7" cy="22.7" r="2" fill="#ff0000"/></g><g transform="translate(1.4 441.2)"><rect x="0.5" y="0.5" width="33.3" height="33" rx="4" fill="url(#hlbtn)" stroke="#959595" stroke-width="1"/><text x="17.2" y="21" font-family="Liberation Sans" font-size="11" fill="#222" text-anchor="middle">Auto</text></g><g transform="translate(1.3 484.5)"><rect x="0.5" y="0.5" width="33.6" height="33" fill="url(#lbtn)" stroke="#9a9a9a" stroke-width="1.2"/><path d="M13 5.6 V20 H29" stroke="#333" stroke-width="1.2" fill="none"/><circle cx="26.4" cy="6.2" r="1.8" fill="#ff0000"/><text x="2.5" y="13" font-family="Liberation Sans" font-size="11" fill="#111">y</text><text x="20.5" y="28.5" font-family="Liberation Sans" font-size="11" fill="#111">x</text></g><g transform="translate(36.2 484.5)"><rect x="0.5" y="0.5" width="33.6" height="33" fill="url(#lbtn)" stroke="#9a9a9a" stroke-width="1.2"/><path d="M4.1 25.8 L21 8.9 Q28.5 15 28.9 25.8 Z" stroke="#111" stroke-width="1.2" fill="none"/><circle cx="21" cy="8.9" r="1.9" fill="#ff0000"/><text x="6.5" y="16" font-family="Liberation Sans" font-size="11" fill="#111">r</text><text x="16.5" y="23.5" font-family="Liberation Sans" font-size="10" fill="#111">α</text></g><g transform="translate(1.3 527.8)"><rect x="0.5" y="0.5" width="33.6" height="32.6" fill="url(#lbtn)" stroke="#9a9a9a" stroke-width="1.2"/><path d="M8.2 8.2 H24.3 M8.2 8.2 V24.1" stroke="#bbb" stroke-width="0.9"/><circle cx="8.2" cy="8.2" r="2.1" fill="#ff0000"/><circle cx="24.3" cy="8.2" r="1.2" fill="#111"/><circle cx="8.2" cy="24.1" r="1.2" fill="#111"/><text x="20.3" y="19" font-family="Liberation Sans" font-size="10.5" fill="#111">2</text><text x="11.5" y="27.5" font-family="Liberation Sans" font-size="10.5" fill="#111">1</text></g><g transform="translate(36.2 527.8)"><rect x="0.5" y="0.5" width="33.6" height="32.6" fill="url(#lbtn)" stroke="#9a9a9a" stroke-width="1.2"/><path d="M7.6 24.1 H24.1 V8.2" stroke="#bbb" stroke-width="0.9" fill="none"/><circle cx="24.1" cy="24.1" r="2.1" fill="#ff0000"/><circle cx="7.6" cy="24.1" r="1.2" fill="#111"/><circle cx="24.1" cy="8.2" r="1.2" fill="#111"/><text x="4.5" y="20.8" font-family="Liberation Sans" font-size="10.5" fill="#111">1</text><text x="15.5" y="12.8" font-family="Liberation Sans" font-size="10.5" fill="#111">2</text></g><g transform="translate(1.3 570.4)"><rect x="0.5" y="0.5" width="33.6" height="32.8" fill="url(#lbtn)" stroke="#9a9a9a" stroke-width="1.2"/><path d="M5.8 7.4 H27.4 V25.4 H13 V21 H5.8 Z" fill="none" stroke="#f4b0b0" stroke-width="0.9"/><circle cx="12" cy="14" r="5.5" fill="none" stroke="#f4b0b0" stroke-width="0.9"/><path d="M16.7 16.7 L24 12 V21 H16.7" fill="none" stroke="#f4b0b0" stroke-width="0.9"/><circle cx="16.7" cy="16.7" r="1.7" fill="#ff0000"/></g><g transform="translate(1.3 613.7)"><rect x="0.5" y="0.5" width="33.6" height="33.5" rx="4" fill="url(#hlbtn)" stroke="#959595" stroke-width="1"/><path d="M14 16.5 h7 M17.5 13 v7" stroke="#444" stroke-width="1"/></g><g transform="translate(36.2 613.7)"><rect x="0.5" y="0.5" width="33.6" height="33.5" fill="url(#lbtn)" stroke="#9a9a9a" stroke-width="1.2"/><path d="M3.8 15.9 H27.5 M15.3 4.9 V28" stroke="#1a1a1a" stroke-width="1.2" fill="none"/><circle cx="15.3" cy="15.9" r="3.3" fill="none" stroke="#ff0000" stroke-width="1"/><path d="M12.0 15.9 h6.6 M15.3 12.600000000000001 v6.6" stroke="#ff0000" stroke-width="0.9"/></g><g transform="translate(1.3 648.3)"><rect x="0.5" y="0.5" width="33.6" height="33" fill="url(#lbtn)" stroke="#9a9a9a" stroke-width="1.2"/><path d="M3.8 15.6 H27.9" stroke="#1a1a1a" stroke-width="1.2" fill="none"/><circle cx="15.9" cy="15.6" r="3.3" fill="none" stroke="#ff0000" stroke-width="1"/><path d="M12.600000000000001 15.6 h6.6 M15.9 12.3 v6.6" stroke="#ff0000" stroke-width="0.9"/></g><g transform="translate(36.2 648.3)"><rect x="0.5" y="0.5" width="33.6" height="33" fill="url(#lbtn)" stroke="#9a9a9a" stroke-width="1.2"/><path d="M15.3 4 V27.2" stroke="#1a1a1a" stroke-width="1.2" fill="none"/><circle cx="15.3" cy="15.6" r="3.3" fill="none" stroke="#ff0000" stroke-width="1"/><path d="M12.0 15.6 h6.6 M15.3 12.3 v6.6" stroke="#ff0000" stroke-width="0.9"/></g><g transform="translate(1.3 683.2)"><rect x="0.5" y="0.5" width="33.6" height="33.3" fill="url(#lbtn)" stroke="#9a9a9a" stroke-width="1.2"/><path d="M7.6 25.5 L26.2 14.4" stroke="#111" stroke-width="1.2"/><circle cx="7.6" cy="25.5" r="4" fill="#ff2020"/><path d="M4.6 25.5 h6 M7.6 22.5 v6" stroke="#fff" stroke-width="0.8"/><path d="M7.6 9.3 L7.6 4.7" stroke="#888" stroke-width="1"/><path d="M11.8 9.9 L13.0 5.4" stroke="#888" stroke-width="1"/><path d="M15.7 11.5 L18.0 7.5" stroke="#888" stroke-width="1"/><path d="M19.1 14.0 L22.3 10.8" stroke="#888" stroke-width="1"/><path d="M21.6 17.4 L25.6 15.1" stroke="#888" stroke-width="1"/><path d="M23.2 21.3 L27.7 20.1" stroke="#888" stroke-width="1"/><path d="M23.8 25.5 L28.4 25.5" stroke="#888" stroke-width="1"/></g><g transform="translate(1.3 726.4)"><rect x="0.5" y="0.5" width="33.6" height="33" fill="url(#lbtn)" stroke="#9a9a9a" stroke-width="1.2"/><circle cx="13" cy="11" r="3.5" fill="none" stroke="#ff0000" stroke-width="1"/><path d="M9.5 11 h7.0 M13 7.5 v7.0" stroke="#ff0000" stroke-width="0.9"/><path d="M13.5 12.5 L13.5 24 L16 21.5 L18 26 L19.5 25.3 L17.5 21 L21 20.5 Z" fill="#fff" stroke="#444" stroke-width="0.9"/></g><g transform="translate(36.2 726.4)"><rect x="0.5" y="0.5" width="33.6" height="33" fill="url(#lbtn)" stroke="#9a9a9a" stroke-width="1.2"/><g transform="translate(5.5 12) scale(1.0)"><ellipse cx="3" cy="0" rx="2.6" ry="3.6" fill="none" stroke="#111" stroke-width="1.7"/><rect x="5.5" y="-1.3" width="13" height="2.6" fill="#111"/><rect x="13" y="0" width="2" height="3.5" fill="#111"/><rect x="16.3" y="0" width="2.4" height="3.5" fill="#111"/></g><circle cx="15.3" cy="24" r="3.5" fill="none" stroke="#ff0000" stroke-width="1"/><path d="M11.8 24 h7.0 M15.3 20.5 v7.0" stroke="#ff0000" stroke-width="0.9"/></g><g transform="translate(1.3 769.3)"><rect x="0.5" y="0.5" width="33.6" height="33" fill="url(#lbtn)" stroke="#9a9a9a" stroke-width="1.2"/><g transform="translate(6.5 16) scale(1.0)"><ellipse cx="3" cy="0" rx="2.6" ry="3.6" fill="none" stroke="#111" stroke-width="1.7"/><rect x="5.5" y="-1.3" width="13" height="2.6" fill="#111"/><rect x="13" y="0" width="2" height="3.5" fill="#111"/><rect x="16.3" y="0" width="2.4" height="3.5" fill="#111"/></g></g><line x1="138.0" y1="148.5" x2="138.0" y2="155" stroke="#333" stroke-width="1"/><text x="138.0" y="141" font-family="Liberation Sans" font-size="10" fill="#111" text-anchor="middle">-60</text><line x1="202.2" y1="148.5" x2="202.2" y2="155" stroke="#333" stroke-width="1"/><text x="202.2" y="141" font-family="Liberation Sans" font-size="10" fill="#111" text-anchor="middle">-50</text><line x1="266.4" y1="148.5" x2="266.4" y2="155" stroke="#333" stroke-width="1"/><text x="266.4" y="141" font-family="Liberation Sans" font-size="10" fill="#111" text-anchor="middle">-40</text><line x1="330.6" y1="148.5" x2="330.6" y2="155" stroke="#333" stroke-width="1"/><text x="330.6" y="141" font-family="Liberation Sans" font-size="10" fill="#111" text-anchor="middle">-30</text><line x1="394.9" y1="148.5" x2="394.9" y2="155" stroke="#333" stroke-width="1"/><text x="394.9" y="141" font-family="Liberation Sans" font-size="10" fill="#111" text-anchor="middle">-20</text><line x1="459.1" y1="148.5" x2="459.1" y2="155" stroke="#333" stroke-width="1"/><text x="459.1" y="141" font-family="Liberation Sans" font-size="10" fill="#111" text-anchor="middle">-10</text><line x1="523.3" y1="148.5" x2="523.3" y2="155" stroke="#333" stroke-width="1"/><text x="523.3" y="141" font-family="Liberation Sans" font-size="10" fill="#111" text-anchor="middle">0</text><line x1="587.5" y1="148.5" x2="587.5" y2="155" stroke="#333" stroke-width="1"/><text x="587.5" y="141" font-family="Liberation Sans" font-size="10" fill="#111" text-anchor="middle">10</text><line x1="651.7" y1="148.5" x2="651.7" y2="155" stroke="#333" stroke-width="1"/><text x="651.7" y="141" font-family="Liberation Sans" font-size="10" fill="#111" text-anchor="middle">20</text><line x1="716.0" y1="148.5" x2="716.0" y2="155" stroke="#333" stroke-width="1"/><text x="716.0" y="141" font-family="Liberation Sans" font-size="10" fill="#111" text-anchor="middle">30</text><line x1="780.2" y1="148.5" x2="780.2" y2="155" stroke="#333" stroke-width="1"/><text x="780.2" y="141" font-family="Liberation Sans" font-size="10" fill="#111" text-anchor="middle">40</text><line x1="844.4" y1="148.5" x2="844.4" y2="155" stroke="#333" stroke-width="1"/><text x="844.4" y="141" font-family="Liberation Sans" font-size="10" fill="#111" text-anchor="middle">50</text><line x1="908.6" y1="148.5" x2="908.6" y2="155" stroke="#333" stroke-width="1"/><text x="908.6" y="141" font-family="Liberation Sans" font-size="10" fill="#111" text-anchor="middle">60</text><line x1="972.8" y1="148.5" x2="972.8" y2="155" stroke="#333" stroke-width="1"/><text x="972.8" y="141" font-family="Liberation Sans" font-size="10" fill="#111" text-anchor="middle">70</text><line x1="1037.1" y1="148.5" x2="1037.1" y2="155" stroke="#333" stroke-width="1"/><text x="1037.1" y="141" font-family="Liberation Sans" font-size="10" fill="#111" text-anchor="middle">80</text><line x1="1101.3" y1="148.5" x2="1101.3" y2="155" stroke="#333" stroke-width="1"/><text x="1101.3" y="141" font-family="Liberation Sans" font-size="10" fill="#111" text-anchor="middle">90</text><line x1="88" y1="171.9" x2="95" y2="171.9" stroke="#333" stroke-width="1"/><text transform="translate(82 171.9) rotate(-90)" x="0" y="0" font-family="Liberation Sans" font-size="10" fill="#111" text-anchor="middle">50</text><line x1="88" y1="236.1" x2="95" y2="236.1" stroke="#333" stroke-width="1"/><text transform="translate(82 236.1) rotate(-90)" x="0" y="0" font-family="Liberation Sans" font-size="10" fill="#111" text-anchor="middle">40</text><line x1="88" y1="300.3" x2="95" y2="300.3" stroke="#333" stroke-width="1"/><text transform="translate(82 300.3) rotate(-90)" x="0" y="0" font-family="Liberation Sans" font-size="10" fill="#111" text-anchor="middle">30</text><line x1="88" y1="364.6" x2="95" y2="364.6" stroke="#333" stroke-width="1"/><text transform="translate(82 364.6) rotate(-90)" x="0" y="0" font-family="Liberation Sans" font-size="10" fill="#111" text-anchor="middle">20</text><line x1="88" y1="428.8" x2="95" y2="428.8" stroke="#333" stroke-width="1"/><text transform="translate(82 428.8) rotate(-90)" x="0" y="0" font-family="Liberation Sans" font-size="10" fill="#111" text-anchor="middle">10</text><line x1="88" y1="493.0" x2="95" y2="493.0" stroke="#333" stroke-width="1"/><text transform="translate(82 493.0) rotate(-90)" x="0" y="0" font-family="Liberation Sans" font-size="10" fill="#111" text-anchor="middle">0</text><line x1="88" y1="557.2" x2="95" y2="557.2" stroke="#333" stroke-width="1"/><text transform="translate(82 557.2) rotate(-90)" x="0" y="0" font-family="Liberation Sans" font-size="10" fill="#111" text-anchor="middle">-10</text><line x1="88" y1="621.4" x2="95" y2="621.4" stroke="#333" stroke-width="1"/><text transform="translate(82 621.4) rotate(-90)" x="0" y="0" font-family="Liberation Sans" font-size="10" fill="#111" text-anchor="middle">-20</text><line x1="88" y1="685.7" x2="95" y2="685.7" stroke="#333" stroke-width="1"/><text transform="translate(82 685.7) rotate(-90)" x="0" y="0" font-family="Liberation Sans" font-size="10" fill="#111" text-anchor="middle">-30</text><path d="M518 145 L529 145 L523.5 150.5 Z" fill="#000"/><line x1="523.5" y1="150" x2="523.5" y2="155" stroke="#333"/><path d="M85 616 L85 627 L90.5 621.5 Z" fill="#000"/><line x1="90" y1="621.5" x2="95" y2="621.5" stroke="#333"/><g><rect x="137.5" y="685.2" width="1" height="1" fill="#e6e6e6"/><rect x="137.5" y="620.9" width="1" height="1" fill="#e6e6e6"/><rect x="137.5" y="556.7" width="1" height="1" fill="#e6e6e6"/><rect x="137.5" y="492.5" width="1" height="1" fill="#e6e6e6"/><rect x="137.5" y="428.3" width="1" height="1" fill="#e6e6e6"/><rect x="137.5" y="364.1" width="1" height="1" fill="#e6e6e6"/><rect x="137.5" y="299.8" width="1" height="1" fill="#e6e6e6"/><rect x="201.7" y="685.2" width="1" height="1" fill="#e6e6e6"/><rect x="201.7" y="620.9" width="1" height="1" fill="#e6e6e6"/><rect x="201.7" y="556.7" width="1" height="1" fill="#e6e6e6"/><rect x="201.7" y="492.5" width="1" height="1" fill="#e6e6e6"/><rect x="201.7" y="428.3" width="1" height="1" fill="#e6e6e6"/><rect x="201.7" y="364.1" width="1" height="1" fill="#e6e6e6"/><rect x="201.7" y="299.8" width="1" height="1" fill="#e6e6e6"/><rect x="265.9" y="685.2" width="1" height="1" fill="#e6e6e6"/><rect x="265.9" y="620.9" width="1" height="1" fill="#e6e6e6"/><rect x="265.9" y="556.7" width="1" height="1" fill="#e6e6e6"/><rect x="265.9" y="492.5" width="1" height="1" fill="#e6e6e6"/><rect x="265.9" y="428.3" width="1" height="1" fill="#e6e6e6"/><rect x="265.9" y="364.1" width="1" height="1" fill="#e6e6e6"/><rect x="265.9" y="299.8" width="1" height="1" fill="#e6e6e6"/><rect x="330.1" y="685.2" width="1" height="1" fill="#e6e6e6"/><rect x="330.1" y="620.9" width="1" height="1" fill="#e6e6e6"/><rect x="330.1" y="556.7" width="1" height="1" fill="#e6e6e6"/><rect x="330.1" y="492.5" width="1" height="1" fill="#e6e6e6"/><rect x="330.1" y="428.3" width="1" height="1" fill="#e6e6e6"/><rect x="330.1" y="364.1" width="1" height="1" fill="#e6e6e6"/><rect x="330.1" y="299.8" width="1" height="1" fill="#e6e6e6"/><rect x="394.4" y="685.2" width="1" height="1" fill="#e6e6e6"/><rect x="394.4" y="620.9" width="1" height="1" fill="#e6e6e6"/><rect x="394.4" y="556.7" width="1" height="1" fill="#e6e6e6"/><rect x="394.4" y="492.5" width="1" height="1" fill="#e6e6e6"/><rect x="394.4" y="428.3" width="1" height="1" fill="#e6e6e6"/><rect x="394.4" y="364.1" width="1" height="1" fill="#e6e6e6"/><rect x="394.4" y="299.8" width="1" height="1" fill="#e6e6e6"/><rect x="458.6" y="685.2" width="1" height="1" fill="#e6e6e6"/><rect x="458.6" y="620.9" width="1" height="1" fill="#e6e6e6"/><rect x="458.6" y="556.7" width="1" height="1" fill="#e6e6e6"/><rect x="458.6" y="492.5" width="1" height="1" fill="#e6e6e6"/><rect x="458.6" y="428.3" width="1" height="1" fill="#e6e6e6"/><rect x="458.6" y="364.1" width="1" height="1" fill="#e6e6e6"/><rect x="458.6" y="299.8" width="1" height="1" fill="#e6e6e6"/><rect x="522.8" y="685.2" width="1" height="1" fill="#e6e6e6"/><rect x="522.8" y="620.9" width="1" height="1" fill="#e6e6e6"/><rect x="522.8" y="556.7" width="1" height="1" fill="#e6e6e6"/><rect x="522.8" y="492.5" width="1" height="1" fill="#e6e6e6"/><rect x="522.8" y="428.3" width="1" height="1" fill="#e6e6e6"/><rect x="522.8" y="364.1" width="1" height="1" fill="#e6e6e6"/><rect x="522.8" y="299.8" width="1" height="1" fill="#e6e6e6"/><rect x="587.0" y="685.2" width="1" height="1" fill="#e6e6e6"/><rect x="587.0" y="620.9" width="1" height="1" fill="#e6e6e6"/><rect x="587.0" y="556.7" width="1" height="1" fill="#e6e6e6"/><rect x="587.0" y="492.5" width="1" height="1" fill="#e6e6e6"/><rect x="587.0" y="428.3" width="1" height="1" fill="#e6e6e6"/><rect x="587.0" y="364.1" width="1" height="1" fill="#e6e6e6"/><rect x="587.0" y="299.8" width="1" height="1" fill="#e6e6e6"/><rect x="651.2" y="685.2" width="1" height="1" fill="#e6e6e6"/><rect x="651.2" y="620.9" width="1" height="1" fill="#e6e6e6"/><rect x="651.2" y="556.7" width="1" height="1" fill="#e6e6e6"/><rect x="651.2" y="492.5" width="1" height="1" fill="#e6e6e6"/><rect x="651.2" y="428.3" width="1" height="1" fill="#e6e6e6"/><rect x="651.2" y="364.1" width="1" height="1" fill="#e6e6e6"/><rect x="651.2" y="299.8" width="1" height="1" fill="#e6e6e6"/><rect x="715.5" y="685.2" width="1" height="1" fill="#e6e6e6"/><rect x="715.5" y="620.9" width="1" height="1" fill="#e6e6e6"/><rect x="715.5" y="556.7" width="1" height="1" fill="#e6e6e6"/><rect x="715.5" y="492.5" width="1" height="1" fill="#e6e6e6"/><rect x="715.5" y="428.3" width="1" height="1" fill="#e6e6e6"/><rect x="715.5" y="364.1" width="1" height="1" fill="#e6e6e6"/><rect x="715.5" y="299.8" width="1" height="1" fill="#e6e6e6"/><rect x="779.7" y="685.2" width="1" height="1" fill="#e6e6e6"/><rect x="779.7" y="620.9" width="1" height="1" fill="#e6e6e6"/><rect x="779.7" y="556.7" width="1" height="1" fill="#e6e6e6"/><rect x="779.7" y="492.5" width="1" height="1" fill="#e6e6e6"/><rect x="779.7" y="428.3" width="1" height="1" fill="#e6e6e6"/><rect x="779.7" y="364.1" width="1" height="1" fill="#e6e6e6"/><rect x="779.7" y="299.8" width="1" height="1" fill="#e6e6e6"/><rect x="843.9" y="685.2" width="1" height="1" fill="#e6e6e6"/><rect x="843.9" y="620.9" width="1" height="1" fill="#e6e6e6"/><rect x="843.9" y="556.7" width="1" height="1" fill="#e6e6e6"/><rect x="843.9" y="492.5" width="1" height="1" fill="#e6e6e6"/><rect x="843.9" y="428.3" width="1" height="1" fill="#e6e6e6"/><rect x="843.9" y="364.1" width="1" height="1" fill="#e6e6e6"/><rect x="843.9" y="299.8" width="1" height="1" fill="#e6e6e6"/><rect x="908.1" y="685.2" width="1" height="1" fill="#e6e6e6"/><rect x="908.1" y="620.9" width="1" height="1" fill="#e6e6e6"/><rect x="908.1" y="556.7" width="1" height="1" fill="#e6e6e6"/><rect x="908.1" y="492.5" width="1" height="1" fill="#e6e6e6"/><rect x="908.1" y="428.3" width="1" height="1" fill="#e6e6e6"/><rect x="908.1" y="364.1" width="1" height="1" fill="#e6e6e6"/><rect x="908.1" y="299.8" width="1" height="1" fill="#e6e6e6"/><rect x="972.3" y="685.2" width="1" height="1" fill="#e6e6e6"/><rect x="972.3" y="620.9" width="1" height="1" fill="#e6e6e6"/><rect x="972.3" y="556.7" width="1" height="1" fill="#e6e6e6"/><rect x="972.3" y="492.5" width="1" height="1" fill="#e6e6e6"/><rect x="972.3" y="428.3" width="1" height="1" fill="#e6e6e6"/><rect x="972.3" y="364.1" width="1" height="1" fill="#e6e6e6"/><rect x="972.3" y="299.8" width="1" height="1" fill="#e6e6e6"/><rect x="1036.6" y="685.2" width="1" height="1" fill="#e6e6e6"/><rect x="1036.6" y="620.9" width="1" height="1" fill="#e6e6e6"/><rect x="1036.6" y="556.7" width="1" height="1" fill="#e6e6e6"/><rect x="1036.6" y="492.5" width="1" height="1" fill="#e6e6e6"/><rect x="1036.6" y="428.3" width="1" height="1" fill="#e6e6e6"/><rect x="1036.6" y="364.1" width="1" height="1" fill="#e6e6e6"/><rect x="1036.6" y="299.8" width="1" height="1" fill="#e6e6e6"/><rect x="1100.8" y="685.2" width="1" height="1" fill="#e6e6e6"/><rect x="1100.8" y="620.9" width="1" height="1" fill="#e6e6e6"/><rect x="1100.8" y="556.7" width="1" height="1" fill="#e6e6e6"/><rect x="1100.8" y="492.5" width="1" height="1" fill="#e6e6e6"/><rect x="1100.8" y="428.3" width="1" height="1" fill="#e6e6e6"/><rect x="1100.8" y="364.1" width="1" height="1" fill="#e6e6e6"/><rect x="1100.8" y="299.8" width="1" height="1" fill="#e6e6e6"/><rect x="786" y="212" width="6" height="477" fill="#808080"/><rect x="455" y="683" width="337" height="6" fill="#808080"/><rect x="448" y="205" width="337.5" height="477" fill="#fff" stroke="#c6c6c6" stroke-width="1"/><rect x="464" y="221" width="305" height="445" rx="1" fill="none" stroke="#8888ff" stroke-width="2"/><line x1="95" y1="493.4" x2="1138" y2="493.4" stroke="#000" stroke-opacity="0.06" stroke-width="1"/><path d="M508.2 355.8 L668.5 347.9 L709.9 499.4" stroke="#5a5a5a" stroke-width="1" fill="none"/><path d="M508.2 359.2 L666.9 351.3 L707.6 500.2" stroke="#5a5a5a" stroke-width="1" fill="none"/><path d="M707.2 500.2 L709.9 499.4" stroke="#5a5a5a" stroke-width="1" fill="none"/><path d="M711.1 515.6 L702.7 540.8 M713.6 516.5 L705.2 541.5 M711.1 515.6 L713.6 516.5" stroke="#5a5a5a" stroke-width="1" fill="none"/><path d="M680.3 344.5 L724 503 Q726 512 724 522 L718.3 542" stroke="#5a5a5a" stroke-width="1" fill="none"/><line x1="571.5" y1="370.3" x2="585.5" y2="363.5" stroke="#c2c2c2" stroke-width="4.3" stroke-linecap="butt"/><line x1="595" y1="361.5" x2="611" y2="361.5" stroke="#c2c2c2" stroke-width="4.3" stroke-linecap="butt"/><line x1="622" y1="363" x2="636" y2="368.5" stroke="#c2c2c2" stroke-width="4.3" stroke-linecap="butt"/><line x1="644.5" y1="375" x2="656" y2="384.5" stroke="#c2c2c2" stroke-width="4.3" stroke-linecap="butt"/><line x1="660.5" y1="395" x2="666.5" y2="408.5" stroke="#c2c2c2" stroke-width="4.3" stroke-linecap="butt"/><line x1="667.3" y1="420.5" x2="666.4" y2="434.5" stroke="#c2c2c2" stroke-width="4.3" stroke-linecap="butt"/><line x1="586.8" y1="495.2" x2="602.4" y2="496.6" stroke="#c2c2c2" stroke-width="4.3" stroke-linecap="butt"/><circle cx="640" cy="372" r="2" fill="#fff" stroke="#111" stroke-width="1.2"/><circle cx="609.3" cy="496.6" r="2" fill="#fff" stroke="#111" stroke-width="1.2"/><circle cx="702" cy="495.5" r="2" fill="#fff" stroke="#111" stroke-width="1.2"/><path d="M515.3 421.8 C530 422 545 418 556 409 C566 400 575 384 590 378 C605 373 625 376 637 388 C652 402 652 425 647 441 C643 453 642 463 648 475 C655 487 660 492 661.2 502.4 C662 506 664 505.4 668 504 C680 500 695 499.4 709.3 499.4" stroke="#dcb270" stroke-width="1" fill="none"/><path d="M514.5 432.6 C528 432 545 428 556 421 C565 413 572 400 585 392 C600 384 620 387 632 398 C642 408 643 425 638 441 C634 452 632 465 640 478 C648 490 652 500 647 512 C641 522 625 525 614 516 C604 508 598 504 590 504 C578 505 566 515 564.6 532.4" stroke="#dcb270" stroke-width="1" fill="none"/><path d="M575.4 532.4 C575 524 583 515 593 514.4 C603 514 610 521 619 527 C630 533 645 530 658 520 C670 512 685 509.5 699 511.4 C704 512 708 514 711.1 515" stroke="#dcb270" stroke-width="1" fill="none"/><path d="M564.1 396.0Q566.3 398.1 563.7 399.7L563.9 399.8Q564.7 402.8 562.1 404.6L562.5 404.8Q563.0 406.9 560.9 407.3L561.2 407.6Q561.0 410.1 558.5 410.4L557.8 409.6Q556.9 413.8 552.7 412.7L552.8 413.0Q552.0 416.4 549.5 414.0L549.6 414.2Q547.3 416.9 544.6 414.5L544.6 414.5Q542.7 416.5 541.5 414.0L541.9 412.5Q538.6 416.0 538.4 411.2L537.7 412.5Q534.1 413.7 533.8 409.9L533.5 410.2Q530.3 409.1 529.8 405.8L530.7 405.3Q526.1 404.0 528.6 399.9L529.3 399.7Q526.0 397.0 529.0 393.9L527.1 393.7Q526.0 391.5 528.0 389.9L529.4 390.4Q527.6 386.7 531.6 385.9L531.5 385.8Q530.5 382.1 534.3 382.7L533.5 381.8Q534.5 378.5 537.9 378.9L538.0 379.0Q540.4 375.2 544.3 377.3L544.5 378.8Q547.3 374.8 549.6 379.1L549.9 377.5Q553.9 376.8 556.2 380.1L555.3 381.4Q560.0 380.1 559.3 384.9L559.4 384.8Q562.9 385.5 562.0 388.9L563.4 388.2Q565.3 391.0 565.0 394.4L563.7 394.5Q566.0 395.2 563.8 396.0Z" fill="none" stroke="#609c32" stroke-width="0.85"/><path d="M561.1 397.9Q562.1 400.1 560.0 401.3L560.1 401.3Q558.7 403.8 555.9 403.8L555.9 404.0Q554.3 404.9 553.0 403.6L552.9 403.8Q550.7 403.5 550.0 401.4L550.5 401.0Q547.9 398.5 550.1 395.6L550.0 395.5Q549.5 393.0 552.1 393.0L552.0 392.9Q554.0 390.6 556.6 392.1L556.6 392.0Q558.7 391.4 559.3 393.4L558.7 394.1Q562.0 394.2 560.3 397.0L561.2 396.9Q562.9 397.2 561.3 397.9Z" fill="none" stroke="#609c32" stroke-width="0.6"/><path d="M552.6 405.4Q554.2 407.6 551.6 408.4L551.6 408.4Q551.8 411.0 549.3 410.2L549.7 411.0Q546.4 412.9 543.7 410.2L543.9 409.9Q541.6 409.4 541.9 407.1L542.5 406.9Q540.5 405.4 542.4 403.9L541.5 403.7Q542.2 399.9 546.0 399.4L546.2 400.2Q549.2 398.6 551.0 401.5L551.5 401.0Q554.4 402.3 553.4 405.4Z" fill="none" stroke="#609c32" stroke-width="0.6"/><path d="M544.6 401.9Q545.4 405.1 542.5 406.5L542.5 406.5Q539.9 409.5 536.5 407.6L536.6 407.2Q534.2 408.3 534.3 405.7L533.9 406.1Q532.0 403.9 532.4 401.0L533.3 401.1Q532.3 398.2 535.3 397.7L535.5 397.9Q536.9 395.2 539.5 396.9L539.7 395.8Q542.2 395.3 543.2 397.7L543.1 397.8Q544.7 398.9 544.6 400.9L543.7 401.0Q545.3 401.3 543.8 401.9Z" fill="none" stroke="#609c32" stroke-width="0.6"/><path d="M543.5 392.0Q543.8 395.3 540.9 397.0L540.3 396.1Q539.5 399.1 537.2 397.0L537.2 398.0Q534.5 398.5 533.1 396.2L533.5 395.7Q530.2 394.1 532.1 391.0L531.9 390.9Q531.6 387.5 534.9 386.9L535.1 387.2Q537.4 384.6 539.7 387.2L539.7 387.1Q543.5 387.4 542.7 391.2L543.5 391.0Q544.5 391.4 543.6 392.0Z" fill="none" stroke="#609c32" stroke-width="0.6"/><path d="M548.0 387.1Q549.7 389.5 546.8 390.4L547.2 390.7Q547.0 392.8 544.9 392.4L544.9 392.4Q543.6 393.8 542.0 392.7L542.1 392.2Q539.5 393.1 538.8 390.4L538.1 391.0Q536.2 389.3 536.6 386.8L536.9 386.8Q535.5 384.5 538.1 383.5L538.3 383.7Q539.0 380.3 542.3 381.5L542.2 380.9Q543.9 380.1 545.2 381.4L544.8 382.3Q547.3 381.7 547.1 384.2L547.1 384.1Q549.8 384.9 548.0 387.1Z" fill="none" stroke="#609c32" stroke-width="0.6"/><path d="M558.5 388.8Q558.8 390.9 557.4 392.5L556.5 391.8Q555.6 395.0 552.5 394.0L552.5 394.1Q548.6 395.3 547.6 391.5L547.3 391.6Q545.0 389.8 546.8 387.5L546.3 387.3Q546.4 385.3 548.1 384.3L548.8 385.1Q549.3 382.4 551.6 383.8L551.5 382.7Q554.0 381.9 555.8 383.7L555.3 384.4Q558.2 383.9 557.2 386.7L557.6 386.5Q559.2 387.4 558.1 388.8Z" fill="none" stroke="#609c32" stroke-width="0.6"/><path d="M546 396 Q551.7 395.8 557.0 392.9" stroke="#609c32" stroke-width="1.1" fill="none"/><path d="M546 396 Q549.5 400.5 555.0 403.0" stroke="#609c32" stroke-width="1.1" fill="none"/><path d="M546 396 Q543.3 401.0 543.3 407.1" stroke="#609c32" stroke-width="1.1" fill="none"/><path d="M546 396 Q541.0 398.7 537.5 403.6" stroke="#609c32" stroke-width="1.1" fill="none"/><path d="M546 396 Q541.3 392.7 535.3 391.9" stroke="#609c32" stroke-width="1.1" fill="none"/><path d="M546 396 Q544.8 390.4 540.9 385.8" stroke="#609c32" stroke-width="1.1" fill="none"/><path d="M546 396 Q549.8 391.7 551.2 385.8" stroke="#609c32" stroke-width="1.1" fill="none"/><circle cx="546" cy="396" r="1.8" fill="#609c32"/><path d="M678.7 461.4Q682.3 463.7 678.3 465.2L679.1 465.4Q680.9 467.6 678.2 468.4L678.1 468.4Q679.1 470.6 676.7 471.1L675.9 470.6Q676.9 474.1 673.2 473.8L674.3 475.0Q673.3 477.5 670.6 477.7L670.4 477.3Q670.0 481.1 667.0 478.8L666.9 478.3Q665.1 482.6 662.0 479.2L662.0 480.2Q660.4 481.6 658.9 480.0L659.1 478.4Q656.8 481.2 656.0 477.7L656.0 477.8Q651.7 479.7 651.0 475.1L650.7 475.5Q646.7 475.9 647.1 471.8L647.7 471.4Q644.3 471.8 646.2 468.9L645.5 469.3Q642.1 467.5 643.9 464.2L643.8 464.2Q641.2 461.7 643.7 459.2L643.2 459.1Q642.1 455.7 644.9 453.4L645.2 453.6Q643.7 449.6 648.0 449.4L648.4 449.8Q647.8 444.9 652.5 446.3L652.4 446.1Q652.4 442.4 655.3 444.7L655.2 444.5Q656.4 442.2 658.5 443.7L658.4 443.1Q661.1 440.6 663.9 443.0L663.8 444.0Q667.7 441.4 669.5 445.7L669.7 445.2Q673.3 444.6 673.9 448.1L674.5 447.5Q677.9 448.9 678.3 452.6L676.6 453.5Q681.3 454.5 678.2 458.2L680.2 457.8Q682.6 459.4 680.6 461.4Z" fill="none" stroke="#609c32" stroke-width="0.85"/><path d="M675.8 464.3Q677.5 466.7 674.6 467.6L675.0 467.9Q674.8 470.0 672.7 469.6L672.7 469.6Q671.4 471.0 669.8 469.9L669.9 469.4Q667.3 470.3 666.6 467.6L665.9 468.2Q664.1 466.5 664.4 464.0L664.7 464.1Q663.3 461.7 665.9 460.7L666.1 460.9Q666.8 457.5 670.1 458.7L670.0 458.1Q671.7 457.3 673.0 458.6L672.6 459.5Q675.1 458.9 674.9 461.4L674.9 461.3Q677.6 462.1 675.8 464.3Z" fill="none" stroke="#609c32" stroke-width="0.6"/><path d="M668.8 470.9Q669.0 472.9 667.6 474.5L666.7 473.8Q665.8 477.0 662.7 476.0L662.7 476.2Q658.9 477.3 657.8 473.5L657.5 473.6Q655.3 471.8 657.0 469.5L656.5 469.4Q656.6 467.3 658.4 466.3L659.1 467.1Q659.6 464.5 661.9 465.8L661.7 464.7Q664.2 463.9 666.0 465.8L665.6 466.4Q668.5 465.9 667.4 468.7L667.8 468.5Q669.4 469.4 668.3 470.9Z" fill="none" stroke="#609c32" stroke-width="0.6"/><path d="M659.0 466.5Q659.9 469.0 657.5 470.3L657.1 470.0Q655.6 473.4 652.4 471.4L652.4 471.5Q648.6 471.9 648.6 468.1L648.6 468.1Q646.4 465.7 649.1 463.9L648.6 463.6Q649.3 460.2 652.8 460.9L652.8 461.2Q654.5 459.7 655.8 461.6L656.1 460.8Q658.9 461.5 659.4 464.4L658.7 464.6Q660.9 465.2 659.0 466.5Z" fill="none" stroke="#609c32" stroke-width="0.6"/><path d="M657.8 459.4Q658.9 462.3 656.0 463.5L656.3 463.9Q655.5 466.2 653.1 465.4L653.0 464.6Q650.1 466.3 648.7 463.2L648.6 463.3Q645.4 463.0 646.9 460.2L647.2 460.1Q645.2 456.4 649.2 455.2L649.0 454.9Q650.8 452.5 653.5 454.0L653.5 453.9Q656.9 453.5 657.3 456.9L656.9 457.1Q659.6 457.7 657.4 459.4Z" fill="none" stroke="#609c32" stroke-width="0.6"/><path d="M666.2 452.0Q667.5 454.8 664.6 455.9L664.5 455.9Q663.5 458.6 660.7 457.7L660.7 457.7Q658.6 459.1 657.5 456.9L657.7 456.4Q654.4 455.7 655.2 452.3L654.3 452.4Q653.1 450.5 654.9 449.2L654.7 449.1Q654.5 446.9 656.8 446.8L657.0 447.2Q659.2 445.2 662.0 446.3L661.9 446.4Q663.7 446.0 664.3 447.8L664.1 448.0Q666.3 448.6 665.6 450.8L665.9 450.7Q668.0 451.1 666.0 452.0Z" fill="none" stroke="#609c32" stroke-width="0.6"/><path d="M674.9 455.5Q675.9 458.3 673.2 459.6L672.6 459.1Q672.5 461.7 670.2 460.5L670.4 461.5Q668.4 463.0 666.6 461.1L666.7 460.8Q663.5 460.6 663.5 457.3L663.6 457.3Q662.1 455.8 663.5 454.2L664.0 454.3Q663.5 450.3 667.5 450.6L667.3 449.8Q668.8 448.4 670.3 449.7L670.4 449.6Q672.8 449.9 674.0 452.0L674.1 451.9Q675.8 453.0 675.2 454.9L675.3 454.9Q676.7 455.1 675.3 455.5Z" fill="none" stroke="#609c32" stroke-width="0.6"/><path d="M661.5 461.4 Q667.0 462.7 672.9 461.2" stroke="#609c32" stroke-width="1.1" fill="none"/><path d="M661.5 461.4 Q665.3 465.7 670.9 467.9" stroke="#609c32" stroke-width="1.1" fill="none"/><path d="M661.5 461.4 Q660.7 467.0 662.8 472.7" stroke="#609c32" stroke-width="1.1" fill="none"/><path d="M661.5 461.4 Q656.2 463.4 652.1 467.9" stroke="#609c32" stroke-width="1.1" fill="none"/><path d="M661.5 461.4 Q657.2 457.6 651.3 456.2" stroke="#609c32" stroke-width="1.1" fill="none"/><path d="M661.5 461.4 Q660.4 455.8 656.6 451.1" stroke="#609c32" stroke-width="1.1" fill="none"/><path d="M661.5 461.4 Q665.7 457.5 667.7 451.8" stroke="#609c32" stroke-width="1.1" fill="none"/><circle cx="661.5" cy="461.4" r="1.8" fill="#609c32"/><path d="M611.6 446.3Q614.8 448.2 611.2 449.3L611.1 449.3Q613.2 451.8 610.0 452.1L610.0 452.1Q611.7 454.7 608.7 454.1L608.0 453.5Q608.8 457.2 605.3 455.8L606.1 457.1Q606.1 459.7 604.1 458.1L604.2 458.5Q603.9 461.1 602.1 459.1L602.0 458.3Q600.3 460.3 598.4 458.5L598.4 458.3Q597.1 460.0 596.5 458.0L596.7 457.4Q594.8 459.3 594.6 456.6L594.4 457.0Q591.2 459.1 591.8 455.4L591.6 455.7Q588.6 456.1 589.4 453.3L589.7 453.1Q586.7 452.6 588.2 449.9L587.0 450.3Q584.4 448.2 586.4 445.5L587.9 445.6Q585.7 443.3 588.7 442.2L589.2 442.4Q586.0 439.4 590.3 440.2L588.8 439.3Q588.5 437.0 590.8 436.9L590.8 436.9Q592.1 434.7 594.6 434.5L594.6 434.4Q595.3 432.3 597.1 433.6L597.3 434.7Q599.4 432.4 601.5 434.7L601.7 433.9Q603.9 432.8 605.1 435.0L604.7 435.9Q607.6 433.1 606.4 437.0L606.1 437.3Q609.6 436.4 608.6 439.8L608.5 439.9Q612.6 438.7 609.5 441.6L610.5 441.1Q613.2 441.4 611.3 443.4L611.6 443.3Q613.3 444.3 612.0 445.7Z" fill="none" stroke="#609c32" stroke-width="0.85"/><path d="M609.9 447.4Q611.4 449.6 608.8 450.1L608.8 450.1Q608.2 452.4 606.1 451.3L606.1 451.3Q604.6 452.8 603.9 450.7L604.2 450.3Q601.4 450.1 602.5 447.6L601.6 447.7Q600.4 446.3 602.1 445.5L601.9 445.4Q601.4 443.5 603.3 443.7L603.6 444.1Q605.0 442.3 607.0 443.5L607.0 443.6Q608.4 443.0 608.6 444.5L608.3 444.8Q610.2 444.9 609.4 446.6L609.6 446.5Q611.7 446.7 609.7 447.4Z" fill="none" stroke="#609c32" stroke-width="0.6"/><path d="M604.6 452.7Q605.7 454.8 603.4 455.6L602.8 455.0Q603.1 457.4 601.2 455.9L601.5 456.9Q600.0 458.4 598.8 456.7L598.9 456.4Q596.3 456.5 596.7 454.0L596.8 453.9Q595.4 452.9 596.7 451.8L597.2 451.9Q596.3 448.7 599.5 449.5L599.3 448.8Q600.3 447.4 601.4 448.7L601.5 448.5Q603.2 448.6 604.0 450.2L604.1 450.2Q605.6 450.8 604.9 452.3L605.0 452.3Q606.4 452.4 605.0 452.7Z" fill="none" stroke="#609c32" stroke-width="0.6"/><path d="M598.6 450.5Q599.9 452.2 597.8 452.9L597.3 452.5Q596.7 455.2 594.3 453.9L594.3 454.0Q592.5 455.8 592.4 453.3L592.2 453.6Q590.4 453.6 590.8 451.9L591.0 451.9Q588.7 450.8 590.8 449.4L591.4 449.6Q590.5 447.1 593.1 447.5L592.6 446.5Q593.5 444.8 595.0 446.1L595.0 446.2Q597.8 445.8 598.3 448.5L598.3 448.5Q599.6 449.2 598.8 450.5Z" fill="none" stroke="#609c32" stroke-width="0.6"/><path d="M597.4 444.4Q598.7 445.9 596.8 446.6L596.4 446.3Q595.8 449.0 593.2 448.0L593.2 448.5Q590.8 449.1 589.9 446.8L590.2 446.6Q587.6 445.3 589.7 443.3L589.9 443.4Q588.3 441.3 590.9 441.8L590.9 441.8Q591.1 439.1 593.1 440.8L593.1 441.0Q595.4 439.3 595.8 442.1L595.8 442.1Q598.5 442.4 596.7 444.4Z" fill="none" stroke="#609c32" stroke-width="0.6"/><path d="M600.6 440.2Q602.2 443.1 598.9 443.0L599.5 444.2Q598.4 445.0 597.0 444.7L597.0 444.3Q594.1 445.0 593.7 442.0L594.2 441.8Q592.1 439.7 594.5 438.1L594.4 438.0Q594.9 435.5 597.3 436.6L597.2 435.8Q599.0 434.5 599.8 436.5L599.3 437.2Q602.5 437.4 600.9 440.1Z" fill="none" stroke="#609c32" stroke-width="0.6"/><path d="M608.6 442.5Q609.8 444.3 607.7 445.0L607.6 444.9Q607.4 447.4 605.2 446.2L605.2 446.5Q603.8 447.3 602.7 446.0L602.9 445.7Q600.9 445.9 601.4 443.9L601.4 443.9Q599.0 442.1 601.6 440.6L601.7 440.6Q602.0 437.3 604.9 438.9L604.9 438.4Q607.3 438.2 608.3 440.3L608.2 440.3Q609.8 441.0 608.8 442.5Z" fill="none" stroke="#609c32" stroke-width="0.6"/><path d="M599.5 446.3 Q603.2 447.5 607.3 446.7" stroke="#609c32" stroke-width="1.1" fill="none"/><path d="M599.5 446.3 Q601.4 449.7 604.9 451.9" stroke="#609c32" stroke-width="1.1" fill="none"/><path d="M599.5 446.3 Q598.1 449.9 598.5 454.0" stroke="#609c32" stroke-width="1.1" fill="none"/><path d="M599.5 446.3 Q596.0 447.9 593.4 451.2" stroke="#609c32" stroke-width="1.1" fill="none"/><path d="M599.5 446.3 Q595.8 445.0 591.7 445.5" stroke="#609c32" stroke-width="1.1" fill="none"/><path d="M599.5 446.3 Q599.0 442.4 596.5 439.1" stroke="#609c32" stroke-width="1.1" fill="none"/><path d="M599.5 446.3 Q602.5 443.8 604.0 439.9" stroke="#609c32" stroke-width="1.1" fill="none"/><circle cx="599.5" cy="446.3" r="1.8" fill="#609c32"/><path d="M616.2 410.3Q616.3 412.6 615.6 414.7L615.5 414.7Q615.7 415.9 614.8 416.8L614.5 416.7Q614.3 418.7 612.6 419.8L612.7 419.9Q611.9 421.5 610.3 422.4L610.2 422.3Q609.4 423.8 607.7 424.0L607.8 424.2Q605.8 425.5 603.5 425.7L603.4 425.4Q601.9 426.2 600.3 425.7L600.3 425.8Q599.3 426.3 598.3 425.6L598.3 425.8Q596.7 426.0 595.4 425.1L595.5 424.8Q593.7 424.7 592.5 423.4L592.5 423.4Q590.9 423.2 590.3 421.7L590.1 421.9Q588.2 420.5 587.2 418.4L587.1 418.5Q585.7 416.8 585.4 414.5L585.4 414.5Q584.4 412.5 584.9 410.2L584.8 410.2Q584.3 408.7 585.0 407.3L585.2 407.3Q584.9 406.0 585.8 405.1L585.9 405.1Q586.0 403.4 587.2 402.2L587.2 402.3Q587.9 400.0 590.0 398.9L589.9 398.8Q590.6 397.4 592.2 397.0L592.3 397.1Q593.3 395.7 595.1 395.7L595.1 395.8Q596.8 394.7 598.8 394.9L598.8 394.8Q600.2 394.3 601.6 394.7L601.6 395.0Q603.9 394.4 605.7 395.8L605.9 395.5Q607.3 395.6 608.4 396.7L608.3 396.9Q610.0 397.2 610.9 398.8L610.8 398.9Q612.5 399.7 613.1 401.5L613.4 401.3Q614.6 402.5 615.0 404.2L614.9 404.2Q615.8 405.0 615.6 406.3L615.3 406.3Q616.6 408.2 615.8 410.3Z" fill="none" stroke="#609c32" stroke-width="0.9"/><path d="M590.6 421.8 A15.1 15.1 0 0 1 587.6 418.3" stroke="#609c32" stroke-width="1.5" fill="none"/><path d="M596.7 424.2 A14.4 14.4 0 0 1 593.1 422.7" stroke="#609c32" stroke-width="1.6" fill="none"/><path d="M608.3 422.5 A14.5 14.5 0 0 1 605.1 424.0" stroke="#609c32" stroke-width="1.5" fill="none"/><path d="M613.9 415.3 A14.3 14.3 0 0 1 612.6 418.0" stroke="#609c32" stroke-width="2.2" fill="none"/><path d="M591.2 421.6 A14.7 14.7 0 0 1 588.8 419.2" stroke="#609c32" stroke-width="1.6" fill="none"/><path d="M607.3 397.3 A14.6 14.6 0 0 1 609.1 398.4" stroke="#609c32" stroke-width="1.7" fill="none"/><path d="M614.9 412.8 A14.6 14.6 0 0 1 613.5 416.9" stroke="#609c32" stroke-width="1.8" fill="none"/><path d="M614.4 405.1 A14.8 14.8 0 0 1 615.0 407.2" stroke="#609c32" stroke-width="1.5" fill="none"/><path d="M612.0 419.0 A14.4 14.4 0 0 1 608.7 422.1" stroke="#609c32" stroke-width="1.5" fill="none"/><path d="M595.4 420.2 l1.2 -1.0" stroke="#609c32" stroke-width="1.2"/><path d="M598.3 421.2 l-0.7 -0.8" stroke="#609c32" stroke-width="1.2"/><path d="M596.3 416.2 l1.3 -1.3" stroke="#609c32" stroke-width="1.2"/><path d="M604.5 418.9 l-0.0 -0.9" stroke="#609c32" stroke-width="1.2"/><path d="M604.4 421.0 l-0.7 -1.0" stroke="#609c32" stroke-width="1.2"/><path d="M596.3 418.3 l0.3 -0.9" stroke="#609c32" stroke-width="1.2"/><path d="M585.5 467.0Q586.0 468.9 585.1 470.6L585.1 470.6Q585.0 473.0 583.5 474.8L583.4 474.7Q583.5 476.0 582.2 476.4L582.4 476.5Q581.4 478.1 579.8 479.2L579.6 479.0Q578.8 480.6 577.0 480.8L576.9 480.7Q575.7 482.0 573.8 481.9L573.9 482.3Q572.6 483.1 571.2 482.8L571.2 482.8Q570.0 483.2 568.8 482.8L568.8 482.5Q566.9 482.9 565.3 481.9L565.3 481.9Q563.0 481.8 561.4 480.2L561.3 480.5Q559.2 479.4 557.8 477.5L557.9 477.4Q556.0 475.9 555.4 473.6L555.3 473.7Q554.3 472.7 554.4 471.3L554.4 471.3Q553.6 469.1 553.8 466.8L554.2 466.8Q553.6 465.3 554.5 463.9L554.4 463.9Q553.9 462.7 555.0 461.9L554.8 461.8Q554.7 460.7 555.6 460.0L555.5 459.9Q555.8 458.5 557.0 457.5L557.1 457.6Q557.5 456.1 559.0 455.5L558.8 455.4Q559.5 454.5 560.5 454.0L560.5 454.1Q562.1 452.8 564.0 452.2L564.1 452.4Q565.9 451.1 568.0 451.5L568.0 451.6Q569.0 450.8 570.0 451.5L570.0 451.5Q572.3 450.8 574.4 452.2L574.5 451.8Q576.7 452.3 578.5 453.7L578.4 453.9Q580.0 454.2 580.7 455.7L580.7 455.7Q582.0 456.1 582.2 457.4L582.0 457.6Q584.0 458.8 584.0 461.2L584.2 461.1Q585.2 461.9 584.9 463.2L584.9 463.2Q586.0 465.0 585.3 467.0Z" fill="none" stroke="#609c32" stroke-width="0.9"/><path d="M576.7 479.6 A14.4 14.4 0 0 1 573.1 481.0" stroke="#609c32" stroke-width="2.2" fill="none"/><path d="M570.9 482.3 A15.4 15.4 0 0 1 566.3 482.0" stroke="#609c32" stroke-width="1.8" fill="none"/><path d="M560.9 478.3 A14.3 14.3 0 0 1 558.3 475.7" stroke="#609c32" stroke-width="1.5" fill="none"/><path d="M582.7 474.0 A14.7 14.7 0 0 1 581.2 476.3" stroke="#609c32" stroke-width="1.9" fill="none"/><path d="M575.5 453.1 A15.1 15.1 0 0 1 577.9 454.4" stroke="#609c32" stroke-width="2.1" fill="none"/><path d="M569.5 481.4 A14.4 14.4 0 0 1 567.1 481.2" stroke="#609c32" stroke-width="1.5" fill="none"/><path d="M577.5 480.3 A15.4 15.4 0 0 1 575.2 481.4" stroke="#609c32" stroke-width="2.1" fill="none"/><path d="M582.5 460.8 A14.2 14.2 0 0 1 583.4 463.1" stroke="#609c32" stroke-width="2.1" fill="none"/><path d="M584.3 464.6 A14.8 14.8 0 0 1 584.3 469.1" stroke="#609c32" stroke-width="1.9" fill="none"/><path d="M579.7 473.9 l1.0 -0.9" stroke="#609c32" stroke-width="1.2"/><path d="M566.0 474.3 l-0.7 -2.2" stroke="#609c32" stroke-width="1.2"/><path d="M575.6 470.1 l-1.0 -1.5" stroke="#609c32" stroke-width="1.2"/><path d="M580.1 468.9 l-0.8 -2.0" stroke="#609c32" stroke-width="1.2"/><path d="M566.8 475.8 l-0.9 -1.7" stroke="#609c32" stroke-width="1.2"/><path d="M569.2 473.6 l2.4 -2.5" stroke="#609c32" stroke-width="1.2"/><path d="M642.2 500.6Q642.7 501.7 642.0 502.7L641.8 502.7Q642.3 504.3 640.9 505.3L641.0 505.3Q640.9 507.0 639.3 507.6L639.3 507.6Q639.0 509.0 637.5 509.1L637.6 509.3Q636.9 510.6 635.4 510.4L635.3 510.3Q634.7 511.1 633.8 510.8L633.9 511.1Q632.8 511.7 631.6 511.3L631.6 511.0Q630.2 511.7 629.0 510.7L629.0 510.6Q628.1 511.1 627.6 510.1L627.6 510.2Q626.2 510.0 625.4 508.9L625.5 508.8Q624.3 508.7 624.2 507.6L624.2 507.6Q622.6 507.0 622.6 505.4L622.7 505.3Q621.4 504.3 621.7 502.7L621.8 502.7Q620.8 501.7 621.5 500.6L621.5 500.6Q620.8 499.0 621.9 497.8L621.7 497.7Q621.2 496.7 622.2 496.3L622.5 496.4Q622.2 495.3 623.3 494.9L623.2 494.9Q623.4 493.6 624.7 493.2L624.3 492.9Q625.0 491.9 626.1 491.5L626.2 491.6Q626.9 490.8 628.0 490.7L628.1 491.0Q629.0 489.8 630.3 490.4L630.3 490.4Q631.8 489.5 633.2 490.4L633.2 490.4Q634.6 489.9 635.5 491.0L635.7 490.6Q637.2 491.1 638.4 492.1L638.4 492.1Q639.5 492.8 640.2 494.0L639.9 494.2Q641.2 494.8 641.1 496.2L641.3 496.1Q642.4 497.1 642.1 498.5L642.0 498.5Q643.0 499.1 642.2 500.0L642.3 500.0Q642.9 500.3 642.3 500.6Z" fill="none" stroke="#609c32" stroke-width="0.9"/><path d="M640.7 505.2 A10.0 10.0 0 0 1 639.6 506.9" stroke="#609c32" stroke-width="2.1" fill="none"/><path d="M635.1 492.1 A9.1 9.1 0 0 1 637.0 493.1" stroke="#609c32" stroke-width="1.5" fill="none"/><path d="M638.8 508.0 A10.2 10.2 0 0 1 636.8 509.4" stroke="#609c32" stroke-width="1.7" fill="none"/><path d="M633.8 509.7 A9.3 9.3 0 0 1 631.8 509.9" stroke="#609c32" stroke-width="1.5" fill="none"/><path d="M640.8 497.3 A9.6 9.6 0 0 1 641.2 498.8" stroke="#609c32" stroke-width="2.1" fill="none"/><path d="M637.5 508.5 A9.7 9.7 0 0 1 635.2 509.7" stroke="#609c32" stroke-width="2.0" fill="none"/><path d="M638.0 493.6 A9.4 9.4 0 0 1 639.2 494.9" stroke="#609c32" stroke-width="2.0" fill="none"/><path d="M641.2 503.7 A9.9 9.9 0 0 1 640.6 505.2" stroke="#609c32" stroke-width="1.6" fill="none"/><path d="M641.6 498.7 A10.0 10.0 0 0 1 641.7 501.5" stroke="#609c32" stroke-width="2.1" fill="none"/><path d="M629.9 504.6 l-0.6 -1.7" stroke="#609c32" stroke-width="1.2"/><path d="M637.6 501.9 l2.0 -2.3" stroke="#609c32" stroke-width="1.2"/><path d="M632.5 505.3 l0.4 -1.0" stroke="#609c32" stroke-width="1.2"/><path d="M635.3 503.0 l-2.1 -1.6" stroke="#609c32" stroke-width="1.2"/><path d="M636.3 501.6 l-0.0 -0.9" stroke="#609c32" stroke-width="1.2"/><path d="M634.7 505.7 l0.7 -2.3" stroke="#609c32" stroke-width="1.2"/><circle cx="629.3" cy="428.6" r="5.5" fill="#609c32"/><path d="M626.8 429.1 l1 1.8 M630.3 425.8 l1.2 1.5 M632.0999999999999 429.6 l-0.5 2 M628.8 431.1 l1.5 0.5 M626.3 426.6 l1.5 0.5" stroke="#c8e0b0" stroke-width="0.7"/><circle cx="625" cy="442.9" r="5.5" fill="#609c32"/><path d="M622.5 443.4 l1 1.8 M626 440.09999999999997 l1.2 1.5 M627.8 443.9 l-0.5 2 M624.5 445.4 l1.5 0.5 M622 440.9 l1.5 0.5" stroke="#c8e0b0" stroke-width="0.7"/><circle cx="621.7" cy="459.5" r="5.5" fill="#609c32"/><path d="M619.2 460.0 l1 1.8 M622.7 456.7 l1.2 1.5 M624.5 460.5 l-0.5 2 M621.2 462.0 l1.5 0.5 M618.7 457.5 l1.5 0.5" stroke="#c8e0b0" stroke-width="0.7"/><circle cx="625.2" cy="476.6" r="5.5" fill="#609c32"/><path d="M622.7 477.1 l1 1.8 M626.2 473.8 l1.2 1.5 M628.0 477.6 l-0.5 2 M624.7 479.1 l1.5 0.5 M622.2 474.6 l1.5 0.5" stroke="#c8e0b0" stroke-width="0.7"/><circle cx="530.6" cy="447" r="5.5" fill="#609c32"/><path d="M528.1 447.5 l1 1.8 M531.6 444.2 l1.2 1.5 M533.4 448 l-0.5 2 M530.1 449.5 l1.5 0.5 M527.6 445 l1.5 0.5" stroke="#c8e0b0" stroke-width="0.7"/><circle cx="546.2" cy="445.3" r="5.5" fill="#609c32"/><path d="M543.7 445.8 l1 1.8 M547.2 442.5 l1.2 1.5 M549.0 446.3 l-0.5 2 M545.7 447.8 l1.5 0.5 M543.2 443.3 l1.5 0.5" stroke="#c8e0b0" stroke-width="0.7"/><circle cx="560.5" cy="439.9" r="5.5" fill="#609c32"/><path d="M558.0 440.4 l1 1.8 M561.5 437.09999999999997 l1.2 1.5 M563.3 440.9 l-0.5 2 M560.0 442.4 l1.5 0.5 M557.5 437.9 l1.5 0.5" stroke="#c8e0b0" stroke-width="0.7"/><circle cx="570.5" cy="495.8" r="5.5" fill="#609c32"/><path d="M568.0 496.3 l1 1.8 M571.5 493.0 l1.2 1.5 M573.3 496.8 l-0.5 2 M570.0 498.3 l1.5 0.5 M567.5 493.8 l1.5 0.5" stroke="#c8e0b0" stroke-width="0.7"/><circle cx="559.2" cy="506.3" r="5.5" fill="#609c32"/><path d="M556.7 506.8 l1 1.8 M560.2 503.5 l1.2 1.5 M562.0 507.3 l-0.5 2 M558.7 508.8 l1.5 0.5 M556.2 504.3 l1.5 0.5" stroke="#c8e0b0" stroke-width="0.7"/><circle cx="551.9" cy="520" r="5.5" fill="#609c32"/><path d="M549.4 520.5 l1 1.8 M552.9 517.2 l1.2 1.5 M554.6999999999999 521 l-0.5 2 M551.4 522.5 l1.5 0.5 M548.9 518 l1.5 0.5" stroke="#c8e0b0" stroke-width="0.7"/><circle cx="523.4" cy="621" r="35" fill="none" stroke="url(#ringg)" stroke-width="8"/><circle cx="523.4" cy="621" r="38" fill="none" stroke="#b0c0d2" stroke-width="1.2" opacity="0.9"/><circle cx="523.4" cy="621" r="35.8" fill="none" stroke="#b8c8d8" stroke-width="1" opacity="0.8"/><circle cx="523.4" cy="621" r="33.6" fill="none" stroke="#c8d4e2" stroke-width="1" opacity="0.7"/><line x1="523.1" y1="155" x2="523.1" y2="732" stroke="#000" stroke-opacity="0.05" stroke-width="1"/><line x1="523.6" y1="155" x2="523.6" y2="732" stroke="rgb(238,190,60)" stroke-opacity="0.6" stroke-width="1.3" stroke-dasharray="4,2" stroke-dashoffset="3.1"/><line x1="95" y1="621.9" x2="1138" y2="621.9" stroke="rgb(238,190,60)" stroke-opacity="0.6" stroke-width="1.3" stroke-dasharray="4,2"/><path d="M503 493.2 H544 M523.5 473 V513.3" stroke="#ff5050" stroke-width="1"/><circle cx="523.5" cy="493.2" r="5" fill="none" stroke="#ff4040" stroke-width="1"/><path d="M507.7 621 H538.6 M523.4 605.4 V636.4" stroke="#a4a4a4" stroke-width="1.5"/><circle cx="523.4" cy="621" r="5" fill="none" stroke="#f2c060" stroke-width="0.8" stroke-dasharray="2,1.5"/><circle cx="523.4" cy="621" r="1" fill="#c08020"/><text x="532" y="639.8" font-family="Liberation Sans" font-size="13.6" fill="#f0c020">Griglia</text></g><rect x="1155" y="108" width="299" height="21.5" fill="url(#hdr)"/><rect x="1155" y="129" width="299" height="1.5" fill="#c4c4c4"/><circle cx="1163.9" cy="118" r="6.8" fill="#6b6b6b"/><circle cx="1182" cy="118" r="6.8" fill="#6b6b6b"/><path d="M1161 115.1 L1166.8 120.9 M1166.8 115.1 L1161 120.9" stroke="#fff" stroke-width="1.7"/><rect x="1181" y="114.5" width="4" height="3.3" fill="none" stroke="#ddd" stroke-width="1"/><rect x="1178.5" y="117" width="4.3" height="3.6" fill="#6b6b6b" stroke="#ddd" stroke-width="1"/><rect x="1156.1999999999998" y="131.4" width="36.60000000000018" height="23.3" fill="url(#lbtn)" stroke="#a6a6a6" stroke-width="1.2"/><rect x="1194.0" y="131.4" width="35.899999999999906" height="23.3" fill="url(#lbtn)" stroke="#a6a6a6" stroke-width="1.2"/><rect x="1231.1" y="131.4" width="36.59999999999995" height="23.3" fill="url(#lbtn)" stroke="#a6a6a6" stroke-width="1.2"/><rect x="1268.8999999999999" y="131.4" width="36.3" height="23.3" fill="url(#lbtn)" stroke="#a6a6a6" stroke-width="1.2"/><rect x="1306.3999999999999" y="131.4" width="36.3" height="23.3" fill="url(#lbtn)" stroke="#a6a6a6" stroke-width="1.2"/><rect x="1343.8999999999999" y="131.4" width="35.8" height="23.3" fill="url(#lbtn)" stroke="#a6a6a6" stroke-width="1.2"/><rect x="1380.3" y="130.3" width="37.299999999999955" height="26.0" rx="5" fill="#b6b6b6"/><rect x="1418.1999999999998" y="131.4" width="35.70000000000009" height="23.3" fill="url(#lbtn)" stroke="#a6a6a6" stroke-width="1.2"/><rect x="1155" y="155.5" width="299" height="1.8" fill="#b8b8b8"/><g transform="translate(1173.8 143) scale(1.0)"><path d="M-7.4 0.3 Q-5 -5.6 0.3 -5.6 Q5.5 -5.6 7.4 -0.3 Q5.2 5.8 0 5.8 Q-5 5.8 -7.4 0.3 Z" fill="#000"/><path d="M-4.6 1 Q-3.2 -2.2 0.3 -2.4 Q3.6 -2.2 4.6 0.8 Q3.2 3.6 0 3.6 Q-3.2 3.6 -4.6 1 Z" fill="#fff"/><circle cx="0.2" cy="0.3" r="2.9" fill="#000"/><path d="M-1.6 -0.4 Q-1 -1.6 0.3 -1.6" stroke="#fff" stroke-width="0.7" fill="none"/></g><g transform="translate(1211.5 143) scale(1.0)"><path d="M-7.4 0.3 Q-5 -5.6 0.3 -5.6 Q5.5 -5.6 7.4 -0.3 Q5.2 5.8 0 5.8 Q-5 5.8 -7.4 0.3 Z" fill="#b4b4b4"/><path d="M-4.6 1 Q-3.2 -2.2 0.3 -2.4 Q3.6 -2.2 4.6 0.8 Q3.2 3.6 0 3.6 Q-3.2 3.6 -4.6 1 Z" fill="#fff"/><circle cx="0.2" cy="0.3" r="2.9" fill="#b4b4b4"/><path d="M-1.6 -0.4 Q-1 -1.6 0.3 -1.6" stroke="#fff" stroke-width="0.7" fill="none"/></g><path d="M1243 143 h12 M1249 137 v12" stroke="#e00000" stroke-width="3"/><path d="M1280.5 143 h11.5" stroke="#e00000" stroke-width="3"/><text x="1316.3" y="148.3" font-family="Liberation Sans" font-size="11.5" fill="#222">a</text><text x="1325" y="148.3" font-family="Liberation Sans" font-size="11.5" fill="#222">b</text><line x1="1323.6" y1="136.6" x2="1323.6" y2="149.4" stroke="#333" stroke-width="0.8"/><line x1="1354" y1="149.4" x2="1367.6" y2="136.9" stroke="#8a6420" stroke-width="2.8" stroke-linecap="round"/><line x1="1354" y1="149.4" x2="1367.6" y2="136.9" stroke="#e8b048" stroke-width="1.6"/><line x1="1365.56" y1="138.775" x2="1367.6" y2="136.9" stroke="#e03030" stroke-width="2.6" stroke-linecap="round"/><circle cx="1354" cy="149.4" r="0.9" fill="#333"/><rect x="1393.8" y="136.9" width="10.3" height="12.3" fill="#e8e8e8" stroke="#aaa" stroke-width="0.6"/><path d="M1395.5 140 Q1397 137.5 1399 138 Q1401 138.5 1401 141 V144.5 H1403 L1399.5 148.5 L1396 144.5 H1398 V141.5 Q1398 140.3 1397 140.5 Z" fill="#1a3cf0"/><rect x="1431.4" y="138.5" width="9.8" height="9.3" fill="#e86a4a" stroke="#d04a2a" stroke-width="0.8"/><path d="M1433.6 140.7 L1439 146 M1439 140.7 L1433.6 146" stroke="#fff" stroke-width="1.4"/><rect x="1155" y="157.3" width="1.2" height="151" fill="#c8c8c8"/><rect x="1156" y="238" width="282.5" height="19.8" fill="#d5d5d5"/><rect x="1438.5" y="157.3" width="0.8" height="151" fill="#ececec"/><rect x="1441.2" y="160.3" width="10.9" height="135.5" rx="5.4" fill="#808080"/><g transform="translate(1169 167.8) scale(1.0)"><path d="M-7.4 0.3 Q-5 -5.6 0.3 -5.6 Q5.5 -5.6 7.4 -0.3 Q5.2 5.8 0 5.8 Q-5 5.8 -7.4 0.3 Z" fill="#000"/><path d="M-4.6 1 Q-3.2 -2.2 0.3 -2.4 Q3.6 -2.2 4.6 0.8 Q3.2 3.6 0 3.6 Q-3.2 3.6 -4.6 1 Z" fill="#fff"/><circle cx="0.2" cy="0.3" r="2.9" fill="#000"/><path d="M-1.6 -0.4 Q-1 -1.6 0.3 -1.6" stroke="#fff" stroke-width="0.7" fill="none"/></g><g transform="translate(1169 187.8) scale(1.0)"><path d="M-7.4 0.3 Q-5 -5.6 0.3 -5.6 Q5.5 -5.6 7.4 -0.3 Q5.2 5.8 0 5.8 Q-5 5.8 -7.4 0.3 Z" fill="#000"/><path d="M-4.6 1 Q-3.2 -2.2 0.3 -2.4 Q3.6 -2.2 4.6 0.8 Q3.2 3.6 0 3.6 Q-3.2 3.6 -4.6 1 Z" fill="#fff"/><circle cx="0.2" cy="0.3" r="2.9" fill="#000"/><path d="M-1.6 -0.4 Q-1 -1.6 0.3 -1.6" stroke="#fff" stroke-width="0.7" fill="none"/></g><g transform="translate(1169 207.8) scale(1.0)"><path d="M-7.4 0.3 Q-5 -5.6 0.3 -5.6 Q5.5 -5.6 7.4 -0.3 Q5.2 5.8 0 5.8 Q-5 5.8 -7.4 0.3 Z" fill="#000"/><path d="M-4.6 1 Q-3.2 -2.2 0.3 -2.4 Q3.6 -2.2 4.6 0.8 Q3.2 3.6 0 3.6 Q-3.2 3.6 -4.6 1 Z" fill="#fff"/><circle cx="0.2" cy="0.3" r="2.9" fill="#000"/><path d="M-1.6 -0.4 Q-1 -1.6 0.3 -1.6" stroke="#fff" stroke-width="0.7" fill="none"/></g><g transform="translate(1169 227.8) scale(1.0)"><path d="M-7.4 0.3 Q-5 -5.6 0.3 -5.6 Q5.5 -5.6 7.4 -0.3 Q5.2 5.8 0 5.8 Q-5 5.8 -7.4 0.3 Z" fill="#000"/><path d="M-4.6 1 Q-3.2 -2.2 0.3 -2.4 Q3.6 -2.2 4.6 0.8 Q3.2 3.6 0 3.6 Q-3.2 3.6 -4.6 1 Z" fill="#fff"/><circle cx="0.2" cy="0.3" r="2.9" fill="#000"/><path d="M-1.6 -0.4 Q-1 -1.6 0.3 -1.6" stroke="#fff" stroke-width="0.7" fill="none"/></g><g transform="translate(1169 247.8) scale(1.0)"><path d="M-7.4 0.3 Q-5 -5.6 0.3 -5.6 Q5.5 -5.6 7.4 -0.3 Q5.2 5.8 0 5.8 Q-5 5.8 -7.4 0.3 Z" fill="#44546a"/><path d="M-4.6 1 Q-3.2 -2.2 0.3 -2.4 Q3.6 -2.2 4.6 0.8 Q3.2 3.6 0 3.6 Q-3.2 3.6 -4.6 1 Z" fill="#fff"/><circle cx="0.2" cy="0.3" r="2.9" fill="#44546a"/><path d="M-1.6 -0.4 Q-1 -1.6 0.3 -1.6" stroke="#fff" stroke-width="0.7" fill="none"/></g><g transform="translate(1169 267.8) scale(1.0)"><path d="M-7.4 0.3 Q-5 -5.6 0.3 -5.6 Q5.5 -5.6 7.4 -0.3 Q5.2 5.8 0 5.8 Q-5 5.8 -7.4 0.3 Z" fill="#000"/><path d="M-4.6 1 Q-3.2 -2.2 0.3 -2.4 Q3.6 -2.2 4.6 0.8 Q3.2 3.6 0 3.6 Q-3.2 3.6 -4.6 1 Z" fill="#fff"/><circle cx="0.2" cy="0.3" r="2.9" fill="#000"/><path d="M-1.6 -0.4 Q-1 -1.6 0.3 -1.6" stroke="#fff" stroke-width="0.7" fill="none"/></g><g transform="translate(1169 287.8) scale(1.0)"><path d="M-7.4 0.3 Q-5 -5.6 0.3 -5.6 Q5.5 -5.6 7.4 -0.3 Q5.2 5.8 0 5.8 Q-5 5.8 -7.4 0.3 Z" fill="#000"/><path d="M-4.6 1 Q-3.2 -2.2 0.3 -2.4 Q3.6 -2.2 4.6 0.8 Q3.2 3.6 0 3.6 Q-3.2 3.6 -4.6 1 Z" fill="#fff"/><circle cx="0.2" cy="0.3" r="2.9" fill="#000"/><path d="M-1.6 -0.4 Q-1 -1.6 0.3 -1.6" stroke="#fff" stroke-width="0.7" fill="none"/></g><g transform="translate(1169 307.8) scale(1.0)"><path d="M-7.4 0.3 Q-5 -5.6 0.3 -5.6 Q5.5 -5.6 7.4 -0.3 Q5.2 5.8 0 5.8 Q-5 5.8 -7.4 0.3 Z" fill="#000"/><path d="M-4.6 1 Q-3.2 -2.2 0.3 -2.4 Q3.6 -2.2 4.6 0.8 Q3.2 3.6 0 3.6 Q-3.2 3.6 -4.6 1 Z" fill="#fff"/><circle cx="0.2" cy="0.3" r="2.9" fill="#000"/><path d="M-1.6 -0.4 Q-1 -1.6 0.3 -1.6" stroke="#fff" stroke-width="0.7" fill="none"/></g><line x1="1184.4" y1="174" x2="1197.5" y2="162" stroke="#8a6420" stroke-width="2.8" stroke-linecap="round"/><line x1="1184.4" y1="174" x2="1197.5" y2="162" stroke="#e8b048" stroke-width="1.6"/><line x1="1195.535" y1="163.8" x2="1197.5" y2="162" stroke="#e03030" stroke-width="2.6" stroke-linecap="round"/><circle cx="1184.4" cy="174" r="0.9" fill="#333"/><rect x="1155" y="308" width="299" height="2" fill="#c2c2c2"/><rect x="1155" y="310" width="299" height="21.5" fill="url(#hdr)"/><rect x="1155" y="331" width="299" height="1.2" fill="#c4c4c4"/><circle cx="1163.9" cy="320.3" r="6.8" fill="#6b6b6b"/><circle cx="1182" cy="320.3" r="6.8" fill="#6b6b6b"/><path d="M1161 317.40000000000003 L1166.8 323.2 M1166.8 317.40000000000003 L1161 323.2" stroke="#fff" stroke-width="1.7"/><rect x="1181" y="316.8" width="4" height="3.3" fill="none" stroke="#ddd" stroke-width="1"/><rect x="1178.5" y="319.3" width="4.3" height="3.6" fill="#6b6b6b" stroke="#ddd" stroke-width="1"/><rect x="1155.8" y="332.6" width="58.09999999999995" height="24.3" fill="url(#lbtn)" stroke="#a6a6a6" stroke-width="1.2"/><rect x="1215.1" y="332.6" width="59.3" height="24.3" fill="url(#lbtn)" stroke="#a6a6a6" stroke-width="1.2"/><rect x="1275.6" y="332.6" width="58.70000000000009" height="24.3" fill="url(#lbtn)" stroke="#a6a6a6" stroke-width="1.2"/><rect x="1335.5" y="332.6" width="58.69999999999986" height="24.3" fill="url(#lbtn)" stroke="#a6a6a6" stroke-width="1.2"/><rect x="1395.3999999999999" y="332.6" width="58.3" height="24.3" fill="url(#lbtn)" stroke="#a6a6a6" stroke-width="1.2"/><rect x="1155" y="357.3" width="299" height="1.5" fill="#b8b8b8"/><g transform="translate(1185 344.5) scale(1.0)"><path d="M-7.4 0.3 Q-5 -5.6 0.3 -5.6 Q5.5 -5.6 7.4 -0.3 Q5.2 5.8 0 5.8 Q-5 5.8 -7.4 0.3 Z" fill="#000"/><path d="M-4.6 1 Q-3.2 -2.2 0.3 -2.4 Q3.6 -2.2 4.6 0.8 Q3.2 3.6 0 3.6 Q-3.2 3.6 -4.6 1 Z" fill="#fff"/><circle cx="0.2" cy="0.3" r="2.9" fill="#000"/><path d="M-1.6 -0.4 Q-1 -1.6 0.3 -1.6" stroke="#fff" stroke-width="0.7" fill="none"/></g><g transform="translate(1245 344.5) scale(1.0)"><path d="M-7.4 0.3 Q-5 -5.6 0.3 -5.6 Q5.5 -5.6 7.4 -0.3 Q5.2 5.8 0 5.8 Q-5 5.8 -7.4 0.3 Z" fill="#b4b4b4"/><path d="M-4.6 1 Q-3.2 -2.2 0.3 -2.4 Q3.6 -2.2 4.6 0.8 Q3.2 3.6 0 3.6 Q-3.2 3.6 -4.6 1 Z" fill="#fff"/><circle cx="0.2" cy="0.3" r="2.9" fill="#b4b4b4"/><path d="M-1.6 -0.4 Q-1 -1.6 0.3 -1.6" stroke="#fff" stroke-width="0.7" fill="none"/></g><path d="M1298.5 344.5 h12 M1304.5 338.5 v12" stroke="#e00000" stroke-width="3"/><path d="M1358.5 344.5 h12" stroke="#e00000" stroke-width="3"/><line x1="1418" y1="351" x2="1431.5" y2="338" stroke="#8a6420" stroke-width="2.8" stroke-linecap="round"/><line x1="1418" y1="351" x2="1431.5" y2="338" stroke="#e8b048" stroke-width="1.6"/><line x1="1429.475" y1="339.95" x2="1431.5" y2="338" stroke="#e03030" stroke-width="2.6" stroke-linecap="round"/><circle cx="1418" cy="351" r="0.9" fill="#333"/><rect x="1155" y="358.5" width="1.2" height="440" fill="#c8c8c8"/><rect x="1161.4" y="365.9" width="15" height="7.6" fill="#ffffff" stroke="#000" stroke-width="1"/><g transform="translate(1422.8 368.8) scale(1.0)"><path d="M-7.4 0.3 Q-5 -5.6 0.3 -5.6 Q5.5 -5.6 7.4 -0.3 Q5.2 5.8 0 5.8 Q-5 5.8 -7.4 0.3 Z" fill="#000"/><path d="M-4.6 1 Q-3.2 -2.2 0.3 -2.4 Q3.6 -2.2 4.6 0.8 Q3.2 3.6 0 3.6 Q-3.2 3.6 -4.6 1 Z" fill="#fff"/><circle cx="0.2" cy="0.3" r="2.9" fill="#000"/><path d="M-1.6 -0.4 Q-1 -1.6 0.3 -1.6" stroke="#fff" stroke-width="0.7" fill="none"/></g><path d="M1441.3999999999999 368.4 V366.2 Q1441.3999999999999 362.4 1445.0 362.4 Q1448.6 362.4 1448.6 366.2 V368.4" fill="none" stroke="#bdbdbd" stroke-width="1.5"/><rect x="1440.1" y="368.4" width="9.8" height="7.4" fill="#bdbdbd"/><rect x="1161.4" y="385.9" width="15" height="7.6" fill="#000000" stroke="#000" stroke-width="1"/><g transform="translate(1422.8 388.8) scale(1.0)"><path d="M-7.4 0.3 Q-5 -5.6 0.3 -5.6 Q5.5 -5.6 7.4 -0.3 Q5.2 5.8 0 5.8 Q-5 5.8 -7.4 0.3 Z" fill="#000"/><path d="M-4.6 1 Q-3.2 -2.2 0.3 -2.4 Q3.6 -2.2 4.6 0.8 Q3.2 3.6 0 3.6 Q-3.2 3.6 -4.6 1 Z" fill="#fff"/><circle cx="0.2" cy="0.3" r="2.9" fill="#000"/><path d="M-1.6 -0.4 Q-1 -1.6 0.3 -1.6" stroke="#fff" stroke-width="0.7" fill="none"/></g><path d="M1441.3999999999999 388.4 V386.2 Q1441.3999999999999 382.4 1445.0 382.4 Q1448.6 382.4 1448.6 386.2 V388.4" fill="none" stroke="#bdbdbd" stroke-width="1.5"/><rect x="1440.1" y="388.4" width="9.8" height="7.4" fill="#bdbdbd"/><rect x="1161.4" y="405.9" width="15" height="7.6" fill="#d4a860" stroke="#000" stroke-width="1"/><g transform="translate(1422.8 408.8) scale(1.0)"><path d="M-7.4 0.3 Q-5 -5.6 0.3 -5.6 Q5.5 -5.6 7.4 -0.3 Q5.2 5.8 0 5.8 Q-5 5.8 -7.4 0.3 Z" fill="#000"/><path d="M-4.6 1 Q-3.2 -2.2 0.3 -2.4 Q3.6 -2.2 4.6 0.8 Q3.2 3.6 0 3.6 Q-3.2 3.6 -4.6 1 Z" fill="#fff"/><circle cx="0.2" cy="0.3" r="2.9" fill="#000"/><path d="M-1.6 -0.4 Q-1 -1.6 0.3 -1.6" stroke="#fff" stroke-width="0.7" fill="none"/></g><path d="M1441.3999999999999 408.4 V406.2 Q1441.3999999999999 402.4 1445.0 402.4 Q1448.6 402.4 1448.6 406.2 V408.4" fill="none" stroke="#bdbdbd" stroke-width="1.5"/><rect x="1440.1" y="408.4" width="9.8" height="7.4" fill="#bdbdbd"/><rect x="1161.4" y="425.9" width="15" height="7.6" fill="#5a9a30" stroke="#000" stroke-width="1"/><g transform="translate(1422.8 428.8) scale(1.0)"><path d="M-7.4 0.3 Q-5 -5.6 0.3 -5.6 Q5.5 -5.6 7.4 -0.3 Q5.2 5.8 0 5.8 Q-5 5.8 -7.4 0.3 Z" fill="#000"/><path d="M-4.6 1 Q-3.2 -2.2 0.3 -2.4 Q3.6 -2.2 4.6 0.8 Q3.2 3.6 0 3.6 Q-3.2 3.6 -4.6 1 Z" fill="#fff"/><circle cx="0.2" cy="0.3" r="2.9" fill="#000"/><path d="M-1.6 -0.4 Q-1 -1.6 0.3 -1.6" stroke="#fff" stroke-width="0.7" fill="none"/></g><path d="M1441.3999999999999 428.4 V426.2 Q1441.3999999999999 422.4 1445.0 422.4 Q1448.6 422.4 1448.6 426.2 V428.4" fill="none" stroke="#bdbdbd" stroke-width="1.5"/><rect x="1440.1" y="428.4" width="9.8" height="7.4" fill="#bdbdbd"/><rect x="1161.4" y="445.9" width="15" height="7.6" fill="#c8c8c8" stroke="#000" stroke-width="1"/><g transform="translate(1422.8 448.8) scale(1.0)"><path d="M-7.4 0.3 Q-5 -5.6 0.3 -5.6 Q5.5 -5.6 7.4 -0.3 Q5.2 5.8 0 5.8 Q-5 5.8 -7.4 0.3 Z" fill="#000"/><path d="M-4.6 1 Q-3.2 -2.2 0.3 -2.4 Q3.6 -2.2 4.6 0.8 Q3.2 3.6 0 3.6 Q-3.2 3.6 -4.6 1 Z" fill="#fff"/><circle cx="0.2" cy="0.3" r="2.9" fill="#000"/><path d="M-1.6 -0.4 Q-1 -1.6 0.3 -1.6" stroke="#fff" stroke-width="0.7" fill="none"/></g><path d="M1441.3999999999999 448.4 V446.2 Q1441.3999999999999 442.4 1445.0 442.4 Q1448.6 442.4 1448.6 446.2 V448.4" fill="none" stroke="#bdbdbd" stroke-width="1.5"/><rect x="1440.1" y="448.4" width="9.8" height="7.4" fill="#bdbdbd"/><rect x="1161.4" y="465.9" width="15" height="7.6" fill="#000000" stroke="#000" stroke-width="1"/><g transform="translate(1422.8 468.8) scale(1.0)"><path d="M-7.4 0.3 Q-5 -5.6 0.3 -5.6 Q5.5 -5.6 7.4 -0.3 Q5.2 5.8 0 5.8 Q-5 5.8 -7.4 0.3 Z" fill="#000"/><path d="M-4.6 1 Q-3.2 -2.2 0.3 -2.4 Q3.6 -2.2 4.6 0.8 Q3.2 3.6 0 3.6 Q-3.2 3.6 -4.6 1 Z" fill="#fff"/><circle cx="0.2" cy="0.3" r="2.9" fill="#000"/><path d="M-1.6 -0.4 Q-1 -1.6 0.3 -1.6" stroke="#fff" stroke-width="0.7" fill="none"/></g><path d="M1441.3999999999999 468.4 V466.2 Q1441.3999999999999 462.4 1445.0 462.4 Q1448.6 462.4 1448.6 466.2 V468.4" fill="none" stroke="#bdbdbd" stroke-width="1.5"/><rect x="1440.1" y="468.4" width="9.8" height="7.4" fill="#bdbdbd"/><line x1="1394.6" y1="395.3" x2="1407.2" y2="382.9" stroke="#8a6420" stroke-width="2.8" stroke-linecap="round"/><line x1="1394.6" y1="395.3" x2="1407.2" y2="382.9" stroke="#e8b048" stroke-width="1.6"/><line x1="1405.31" y1="384.76" x2="1407.2" y2="382.9" stroke="#e03030" stroke-width="2.6" stroke-linecap="round"/><circle cx="1394.6" cy="395.3" r="0.9" fill="#333"/><rect x="1462" y="116" width="2" height="2" fill="#9a9a9a"/><rect x="1468" y="116" width="2" height="2" fill="#9a9a9a"/><rect x="1474" y="116" width="2" height="2" fill="#9a9a9a"/><rect x="1480" y="116" width="2" height="2" fill="#9a9a9a"/><rect x="1486" y="116" width="2" height="2" fill="#9a9a9a"/><rect x="1456" y="120" width="42.5" height="42.69999999999999" rx="6" fill="#b4b4b4"/><rect x="1456" y="167.1" width="42.5" height="42.599999999999994" rx="6" fill="#b4b4b4"/><rect x="1456" y="418.5" width="42.5" height="41.5" rx="6" fill="#b4b4b4"/><rect x="1458" y="262" width="1.2" height="1.2" fill="#666"/><rect x="1458" y="410.3" width="1.2" height="1.2" fill="#666"/><rect x="1461" y="262" width="1.2" height="1.2" fill="#666"/><rect x="1461" y="410.3" width="1.2" height="1.2" fill="#666"/><rect x="1464" y="262" width="1.2" height="1.2" fill="#666"/><rect x="1464" y="410.3" width="1.2" height="1.2" fill="#666"/><rect x="1467" y="262" width="1.2" height="1.2" fill="#666"/><rect x="1467" y="410.3" width="1.2" height="1.2" fill="#666"/><rect x="1470" y="262" width="1.2" height="1.2" fill="#666"/><rect x="1470" y="410.3" width="1.2" height="1.2" fill="#666"/><rect x="1473" y="262" width="1.2" height="1.2" fill="#666"/><rect x="1473" y="410.3" width="1.2" height="1.2" fill="#666"/><rect x="1476" y="262" width="1.2" height="1.2" fill="#666"/><rect x="1476" y="410.3" width="1.2" height="1.2" fill="#666"/><rect x="1479" y="262" width="1.2" height="1.2" fill="#666"/><rect x="1479" y="410.3" width="1.2" height="1.2" fill="#666"/><rect x="1482" y="262" width="1.2" height="1.2" fill="#666"/><rect x="1482" y="410.3" width="1.2" height="1.2" fill="#666"/><rect x="1485" y="262" width="1.2" height="1.2" fill="#666"/><rect x="1485" y="410.3" width="1.2" height="1.2" fill="#666"/><rect x="1488" y="262" width="1.2" height="1.2" fill="#666"/><rect x="1488" y="410.3" width="1.2" height="1.2" fill="#666"/><rect x="1491" y="262" width="1.2" height="1.2" fill="#666"/><rect x="1491" y="410.3" width="1.2" height="1.2" fill="#666"/><rect x="1494" y="262" width="1.2" height="1.2" fill="#666"/><rect x="1494" y="410.3" width="1.2" height="1.2" fill="#666"/><rect x="1497" y="262" width="1.2" height="1.2" fill="#666"/><rect x="1497" y="410.3" width="1.2" height="1.2" fill="#666"/><rect x="1463.5" y="127.7" width="27" height="27" fill="#fff" stroke="#333" stroke-width="1"/><rect x="1463.5" y="127.7" width="27" height="4.5" fill="#000"/><rect x="1464.8" y="128.7" width="3" height="3" fill="#fff"/><path d="M1471 143 L1477 139 L1477 150 L1471 153 Z" fill="#ddd" stroke="#555" stroke-width="0.7"/><path d="M1474 141.5 L1483 136.5 L1483 147.5 L1474 152 Z" fill="#fff" stroke="#555" stroke-width="0.7"/><path d="M1476 149 L1480.5 141 L1481 147" fill="none" stroke="#f05050" stroke-width="0.8"/><rect x="1463.5" y="174.7" width="27" height="27" fill="#fff" stroke="#333" stroke-width="1"/><rect x="1463.5" y="174.7" width="27" height="4.5" fill="#000"/><rect x="1464.8" y="175.7" width="3" height="3" fill="#fff"/><rect x="1470" y="183" width="10.5" height="8.5" fill="#f4e8c0" stroke="#555" stroke-width="0.8"/><circle cx="1479" cy="192" r="4.8" fill="#f4e8c0" stroke="#555" stroke-width="0.8"/><rect x="1463.5" y="221.7" width="27" height="27" fill="#fff" stroke="#333" stroke-width="1"/><rect x="1463.5" y="221.7" width="27" height="4.5" fill="#000"/><rect x="1464.8" y="222.7" width="3" height="3" fill="#fff"/><rect x="1469.5" y="230" width="15" height="11" rx="2.5" fill="#f6f6f4" stroke="#c0d0e8" stroke-width="1"/><rect x="1463.5" y="277.7" width="27" height="27" fill="#fff" stroke="#333" stroke-width="1"/><rect x="1463.5" y="277.7" width="27" height="4.5" fill="#000"/><rect x="1464.8" y="278.7" width="3" height="3" fill="#fff"/><rect x="1466.5" y="285.0" width="3.5" height="2.8" fill="#000"/><rect x="1473" y="284.8" width="14.5" height="3.2" fill="#fff" stroke="#333" stroke-width="0.6"/><rect x="1466.5" y="290.5" width="3.5" height="2.8" fill="#000"/><rect x="1473" y="290.3" width="14.5" height="3.2" fill="#fff" stroke="#333" stroke-width="0.6"/><rect x="1466.5" y="296.0" width="3.5" height="2.8" fill="#000"/><rect x="1473" y="295.8" width="14.5" height="3.2" fill="#fff" stroke="#333" stroke-width="0.6"/><rect x="1463.5" y="323.8" width="27" height="27" fill="#fff" stroke="#333" stroke-width="1"/><rect x="1463.5" y="323.8" width="27" height="4.5" fill="#000"/><rect x="1464.8" y="324.8" width="3" height="3" fill="#fff"/><path d="M1470.5 335.5 H1483.5 L1478.3 342 V348 L1475.7 346.5 V342 Z" fill="#e0e0e0" stroke="#444" stroke-width="0.8"/><ellipse cx="1477" cy="335.5" rx="6.5" ry="1.3" fill="#bbb" stroke="#444" stroke-width="0.6"/><rect x="1463.5" y="369.5" width="27" height="27" fill="#fff" stroke="#333" stroke-width="1"/><rect x="1463.5" y="369.5" width="27" height="4.5" fill="#000"/><rect x="1464.8" y="370.5" width="3" height="3" fill="#fff"/><path d="M1469 376 L1475 380 H1484 V388 H1475 L1469 392 Z" fill="#f4f4f4" stroke="#444" stroke-width="0.8"/><rect x="1476" y="380" width="8" height="8" fill="#999"/><line x1="1466" y1="384" x2="1488" y2="384" stroke="#f08080" stroke-width="0.6" stroke-dasharray="1.5,1"/><rect x="1463.5" y="425.5" width="27" height="27" fill="#fff" stroke="#333" stroke-width="1"/><rect x="1463.5" y="425.5" width="27" height="4.5" fill="#000"/><rect x="1464.8" y="426.5" width="3" height="3" fill="#fff"/><line x1="1466" y1="433" x2="1478" y2="433" stroke="#aaa" stroke-width="0.8"/><line x1="1466" y1="436" x2="1480" y2="436" stroke="#aaa" stroke-width="0.8"/><line x1="1466" y1="439" x2="1478" y2="439" stroke="#aaa" stroke-width="0.8"/><line x1="1466" y1="442" x2="1480" y2="442" stroke="#aaa" stroke-width="0.8"/><line x1="1466" y1="445" x2="1478" y2="445" stroke="#aaa" stroke-width="0.8"/><line x1="1464" y1="448" x2="1490" y2="448" stroke="#333" stroke-width="0.6"/><line x1="1473" y1="450.5" x2="1487" y2="450.5" stroke="#777" stroke-width="0.8"/><rect x="1463.5" y="472.5" width="27" height="27" fill="#fff" stroke="#333" stroke-width="1"/><rect x="1463.5" y="472.5" width="27" height="4.5" fill="#000"/><rect x="1464.8" y="473.5" width="3" height="3" fill="#fff"/><rect x="1470.5" y="482" width="13" height="14" fill="#c8893a" stroke="#8a5a20" stroke-width="0.5"/><rect x="1472.5" y="484" width="9" height="10.5" fill="#f4f4f4"/><rect x="1474" y="480.5" width="6" height="2.8" fill="#999"/></svg>
<div class="t" style="left:83px;top:82px;font-size:13px;color:#1a1a1a">Rotazione:</div>
<div class="spin" style="left:161px;top:78px;width:78px;height:20px"></div><div class="t" style="left:165px;top:80px;font-size:14px;color:#111">0</div><div class="spinb" style="left:221px;top:80px;width:16px;height:16px"></div>
<div class="t" style="left:259px;top:82px;font-size:13px;color:#1a1a1a">Scala X:</div>
<div class="spin" style="left:322px;top:78px;width:78px;height:20px"></div><div class="t" style="left:326px;top:80px;font-size:14px;color:#111">1</div><div class="spinb" style="left:382px;top:80px;width:16px;height:16px"></div>
<div class="t" style="left:413px;top:82px;font-size:13px;color:#b0b0b0">Y:</div>
<div class="spin" style="left:440px;top:78px;width:78px;height:20px"></div><div class="t" style="left:444px;top:80px;font-size:14px;color:#111">1</div><div class="spinb" style="left:500px;top:80px;width:16px;height:16px"></div>
<svg class="ov" width="1500" height="844"><path d="M226 86 L229 83 L232 86 M226 90 L229 93 L232 90" fill="none" stroke="#fff" stroke-width="1.3"/><path d="M387 86 L390 83 L393 86 M387 90 L390 93 L393 90" fill="none" stroke="#fff" stroke-width="1.3"/><path d="M505 86 L508 83 L511 86 M505 90 L508 93 L511 90" fill="none" stroke="#fff" stroke-width="1.3"/></svg>
<svg class="ov" width="1500" height="844"><path d="M79 115.8 L87 123.8 M87 115.8 L79 123.8" stroke="#555" stroke-width="1.1"/><circle cx="102" cy="118.7" r="5.4" fill="#f4f4f4" stroke="#1f3a8a" stroke-width="1.9"/><path d="M97.5 115 A5.4 5.4 0 0 1 104 113.6" stroke="#7a90c8" stroke-width="1.9" fill="none"/><path d="M99 119.5 h2 M101 116 v3" stroke="#e06060" stroke-width="0.6"/><line x1="102.3" y1="118.8" x2="106.3" y2="122.8" stroke="#f0a010" stroke-width="2.2"/><circle cx="106.8" cy="123.3" r="1.3" fill="#e05050"/></svg>
<div class="t" style="left:606.3px;top:114.5px;font-size:11.5px;letter-spacing:0.25px;color:#111">* park.dxf</div>
<div class="t" style="left:1173px;width:299px;text-align:center;top:113px;font-size:12px;color:#333">Elenco dei blocchi</div>
<div class="t" style="left:1173px;width:299px;text-align:center;top:315px;font-size:12px;color:#333">Elenco dei livelli</div>
<div class="a" style="left:1155px;top:157.3px;width:283px;height:151px;overflow:hidden"><div class="t" style="left:50.5px;top:4px;font-size:13.2px;color:#111">Model (*Model_Space)</div><div class="t" style="left:50.5px;top:24px;font-size:13.2px;color:#111">Layout1 (*Paper_Space)</div><div class="t" style="left:50.5px;top:44px;font-size:13.2px;color:#111">Albero A</div><div class="t" style="left:50.5px;top:64px;font-size:13.2px;color:#111">Albero B</div><div class="t" style="left:50.5px;top:84px;font-size:13.2px;color:#111">Bordo</div><div class="t" style="left:50.5px;top:104px;font-size:13.2px;color:#111">Cestino</div><div class="t" style="left:50.5px;top:124px;font-size:13.2px;color:#111">Panchina</div><div class="t" style="left:50.5px;top:144px;font-size:13.2px;color:#111">Titolo</div></div>
<div class="t" style="left:1183.4px;top:362.5px;font-size:13.6px;color:#111">0</div>
<div class="t" style="left:1183.4px;top:382.5px;font-size:13.6px;color:#111">Bordo</div>
<div class="t" style="left:1183.4px;top:402.5px;font-size:13.6px;color:#111">Percorsi</div>
<div class="t" style="left:1183.4px;top:422.5px;font-size:13.6px;color:#111">Piante</div>
<div class="t" style="left:1183.4px;top:442.5px;font-size:13.6px;color:#111">Strutture</div>
<div class="t" style="left:1183.4px;top:462.5px;font-size:13.6px;color:#111">Titolo</div>
<div class="t" style="left:77.3px;top:752px;font-size:13.5px;color:#0a0ad8"><i>Comando:</i> blockinsert</div>
<div class="t" style="left:73.6px;top:779.3px;font-size:13px;color:#111">Posizione:</div>
<div class="a" style="left:1083px;top:732px;width:72px;height:16px;background:#ececec"></div>
<div class="t" style="left:1083px;width:71px;text-align:right;top:733.5px;font-size:13.5px;color:#111">10 &lt; 100</div>
<svg class="ov" width="1500" height="844"><rect x="1144" y="750" width="7" height="18" rx="3.5" fill="#808080"/><rect x="1127.5" y="772.7" width="25" height="24.5" fill="#f2f2f2" stroke="#bbb" stroke-width="1"/><rect x="1132.5" y="779.5" width="15" height="10" fill="#fff" stroke="#222" stroke-width="1"/><rect x="1132.5" y="779.5" width="15" height="2.5" fill="#222"/><rect x="72" y="748" width="1.5" height="50" fill="#9a9a9a"/></svg>
<div class="a" style="left:0;top:798px;width:1500px;height:46px;background:#dcdcdc"></div>
<div class="t" style="left:2px;top:808px;font-size:10px;letter-spacing:0.1px;color:#111">0,-20</div>
<div class="t" style="left:2px;top:828.5px;font-size:10px;letter-spacing:0.1px;color:#111">@0,-20</div>
<div class="t" style="left:256px;top:808px;font-size:10px;letter-spacing:0.1px;color:#111">20&lt;270°</div>
<div class="t" style="left:256px;top:828.5px;font-size:10px;letter-spacing:0.1px;color:#111">@20&lt;270°</div>
<div class="t" style="left:655.2px;top:818px;font-size:10px;letter-spacing:0.1px;color:#111">Posizione</div>
<div class="t" style="left:754px;top:818px;font-size:10px;letter-spacing:0.1px;color:#111">Annulla</div>
<div class="t" style="left:949px;top:818px;font-size:10px;letter-spacing:0.1px;color:#111">Nessun entità selezionate.</div>
<svg class="ov" width="1500" height="844"><rect x="253" y="803" width="1" height="37" fill="#999"/><rect x="254" y="803" width="1" height="37" fill="#f4f4f4"/><circle cx="509.2" cy="821.7" r="2.8" fill="#c4c4c4"/><circle cx="943.5" cy="821.7" r="2.8" fill="#c4c4c4"/><circle cx="1272" cy="821.7" r="2.8" fill="#c4c4c4"/><path d="M717.5 815 Q717.5 806 726 806 Q734.5 806 734.5 815 V827 Q734.5 835.5 726 835.5 Q717.5 835.5 717.5 827 Z" fill="#fff" stroke="#333" stroke-width="0.9"/><line x1="717.5" y1="819.5" x2="734.5" y2="819.5" stroke="#333" stroke-width="0.9"/><line x1="726" y1="806" x2="726" y2="819.5" stroke="#333" stroke-width="0.6"/><rect x="724.3" y="808" width="3.4" height="7" rx="1.7" fill="#fff" stroke="#333" stroke-width="0.8"/></svg></body></html>
